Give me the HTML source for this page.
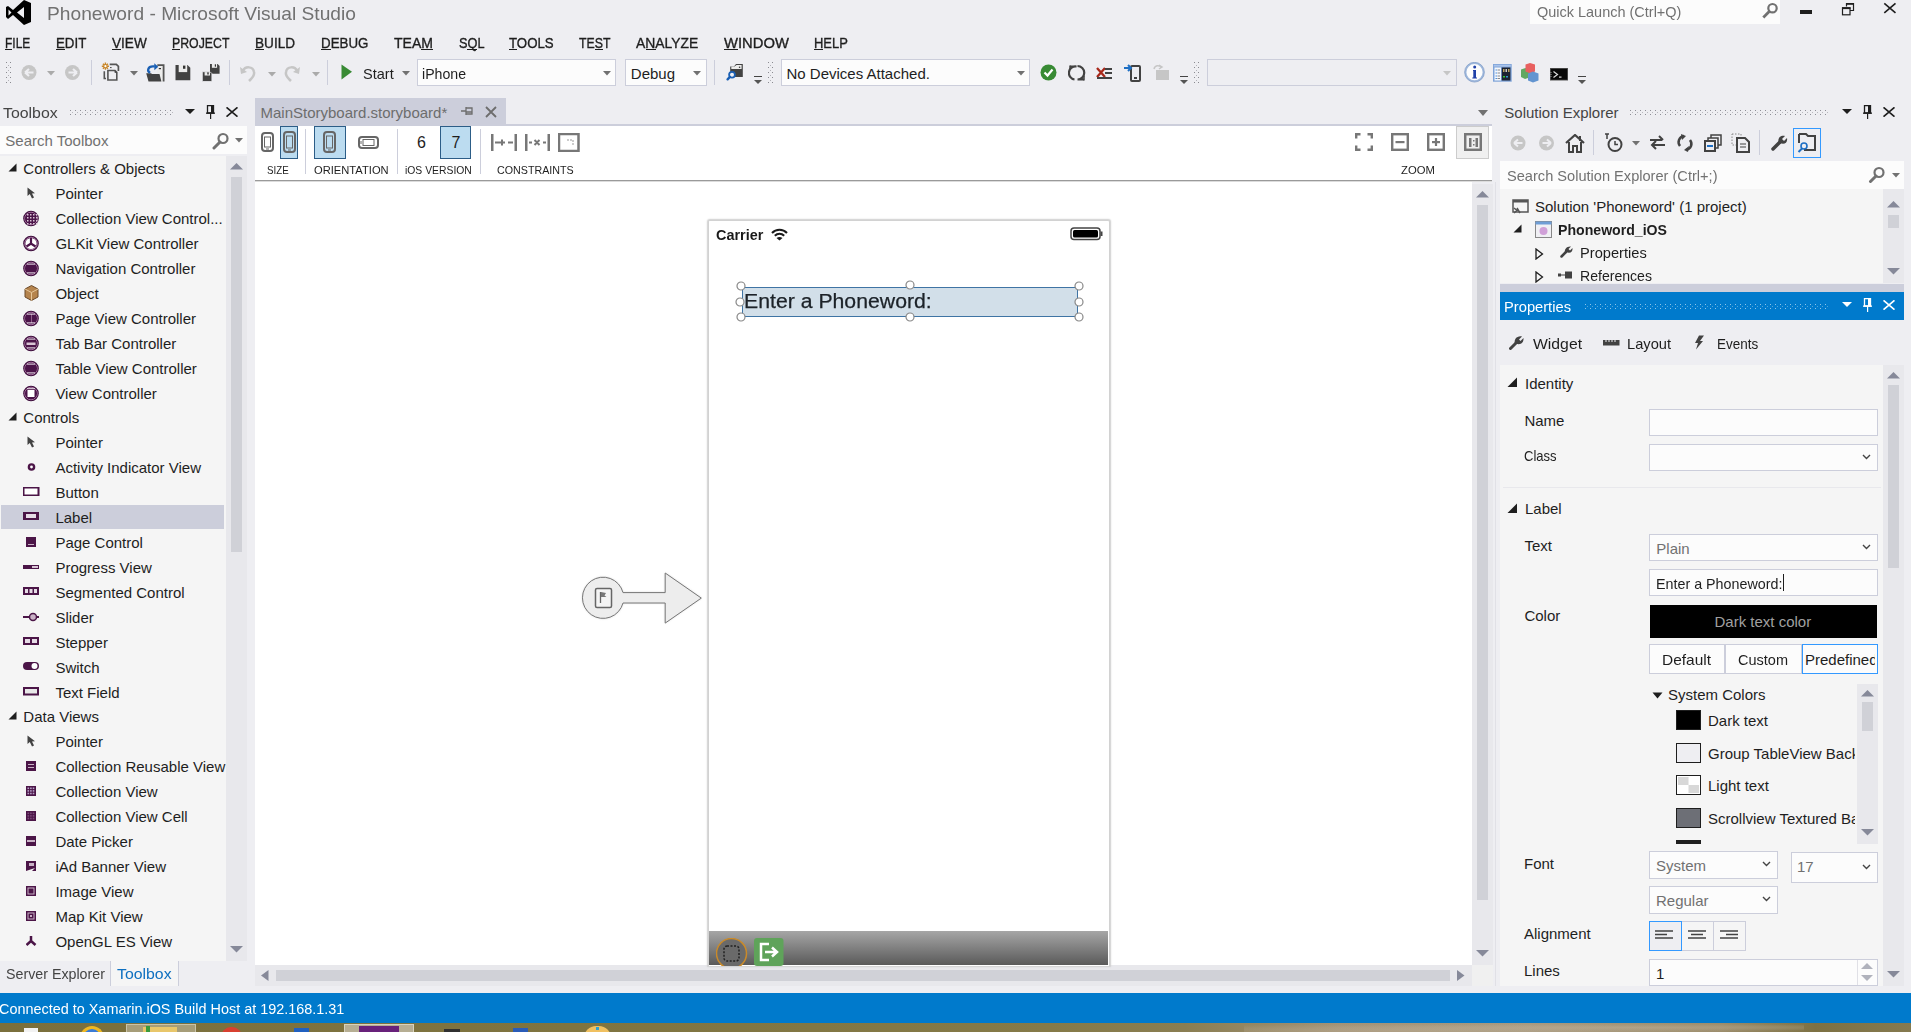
<!DOCTYPE html>
<html><head><meta charset="utf-8"><title>VS</title>
<style>
html,body{margin:0;padding:0;}
body{width:1911px;height:1032px;overflow:hidden;position:relative;background:#eeeef2;font-family:"Liberation Sans",sans-serif;}
body>div,body>svg{position:absolute;}
.t{position:absolute;white-space:nowrap;}
div>div.t{position:absolute;}
</style></head><body>
<svg style="left:5px;top:0px;" width="27" height="26" viewBox="0 0 27 26"><path d="M19 0 L26 3 L26 22 L19 25 L8 15 L3 19 L1 17 L1 7 L3 6 L8 10 Z M19 7 L12 12.5 L19 18 Z M3.5 9.5 L3.5 15.5 L6.5 12.5 Z" fill="#000" fill-rule="evenodd"/></svg>
<div class="t" style="left:46.5px;top:3.8px;font-size:19px;line-height:19px;color:#717171;transform:scaleX(1.010);transform-origin:0 0;">Phoneword - Microsoft Visual Studio</div>
<div style="left:1530px;top:0px;width:250px;height:24px;background:#fcfcfc;"></div>
<div class="t" style="left:1536.5px;top:3.6px;font-size:15px;line-height:15px;color:#717171;transform:scaleX(0.965);transform-origin:0 0;">Quick Launch (Ctrl+Q)</div>
<svg style="left:1760px;top:2px;" width="20" height="17" viewBox="0 0 20 17"><circle cx="12.5" cy="6.2" r="4.2" fill="none" stroke="#717171" stroke-width="2.2"/><path d="M9.5 9.2 L3.3 15.4" stroke="#717171" stroke-width="2.8"/></svg>
<div style="left:1800px;top:10px;width:12px;height:4px;background:#1e1e1e;"></div>
<svg style="left:1840px;top:2px;" width="16" height="15" viewBox="0 0 16 15"><path d="M6.5 4.5 L6.5 1.5 L13.5 1.5 L13.5 8.5 L10 8.5" stroke="#1e1e1e" stroke-width="1.2" fill="none"/><rect x="6.5" y="1" width="7" height="1.8" fill="#1e1e1e"/><rect x="2.5" y="5.8" width="7.5" height="7" fill="none" stroke="#1e1e1e" stroke-width="1.2"/><rect x="2" y="5.3" width="8.5" height="1.8" fill="#1e1e1e"/></svg>
<svg style="left:1883px;top:2px;" width="14" height="12" viewBox="0 0 14 12"><path d="M1.3 1.3 L12.5 10.8 M12.5 1.3 L1.3 10.8" stroke="#1e1e1e" stroke-width="1.6"/></svg>
<div class="t" style="left:5.1px;top:35.4px;font-size:15px;line-height:15px;color:#1e1e1e;transform:scaleX(0.799);transform-origin:0 0;-webkit-text-stroke:0.35px #1e1e1e;">FILE</div>
<div style="left:5px;top:49px;width:7px;height:1px;background:#1e1e1e;"></div>
<div class="t" style="left:56.0px;top:35.4px;font-size:15px;line-height:15px;color:#1e1e1e;transform:scaleX(0.887);transform-origin:0 0;-webkit-text-stroke:0.35px #1e1e1e;">EDIT</div>
<div style="left:56px;top:49px;width:9px;height:1px;background:#1e1e1e;"></div>
<div class="t" style="left:112.0px;top:35.4px;font-size:15px;line-height:15px;color:#1e1e1e;transform:scaleX(0.905);transform-origin:0 0;-webkit-text-stroke:0.35px #1e1e1e;">VIEW</div>
<div style="left:112px;top:49px;width:9px;height:1px;background:#1e1e1e;"></div>
<div class="t" style="left:172.2px;top:35.4px;font-size:15px;line-height:15px;color:#1e1e1e;transform:scaleX(0.820);transform-origin:0 0;-webkit-text-stroke:0.35px #1e1e1e;">PROJECT</div>
<div style="left:172px;top:49px;width:8px;height:1px;background:#1e1e1e;"></div>
<div class="t" style="left:255.0px;top:35.4px;font-size:15px;line-height:15px;color:#1e1e1e;transform:scaleX(0.906);transform-origin:0 0;-webkit-text-stroke:0.35px #1e1e1e;">BUILD</div>
<div style="left:255px;top:49px;width:9px;height:1px;background:#1e1e1e;"></div>
<div class="t" style="left:321.0px;top:35.4px;font-size:15px;line-height:15px;color:#1e1e1e;transform:scaleX(0.889);transform-origin:0 0;-webkit-text-stroke:0.35px #1e1e1e;">DEBUG</div>
<div style="left:321px;top:49px;width:10px;height:1px;background:#1e1e1e;"></div>
<div class="t" style="left:394.0px;top:35.4px;font-size:15px;line-height:15px;color:#1e1e1e;transform:scaleX(0.936);transform-origin:0 0;-webkit-text-stroke:0.35px #1e1e1e;">TEAM</div>
<div style="left:421px;top:49px;width:12px;height:1px;background:#1e1e1e;"></div>
<div class="t" style="left:458.5px;top:35.4px;font-size:15px;line-height:15px;color:#1e1e1e;transform:scaleX(0.850);transform-origin:0 0;-webkit-text-stroke:0.35px #1e1e1e;">SQL</div>
<div style="left:467px;top:49px;width:10px;height:1px;background:#1e1e1e;"></div>
<div class="t" style="left:508.9px;top:35.4px;font-size:15px;line-height:15px;color:#1e1e1e;transform:scaleX(0.884);transform-origin:0 0;-webkit-text-stroke:0.35px #1e1e1e;">TOOLS</div>
<div style="left:509px;top:49px;width:8px;height:1px;background:#1e1e1e;"></div>
<div class="t" style="left:579.2px;top:35.4px;font-size:15px;line-height:15px;color:#1e1e1e;transform:scaleX(0.820);transform-origin:0 0;-webkit-text-stroke:0.35px #1e1e1e;">TEST</div>
<div style="left:595px;top:49px;width:8px;height:1px;background:#1e1e1e;"></div>
<div class="t" style="left:636.3px;top:35.4px;font-size:15px;line-height:15px;color:#1e1e1e;transform:scaleX(0.927);transform-origin:0 0;-webkit-text-stroke:0.35px #1e1e1e;">ANALYZE</div>
<div style="left:646px;top:49px;width:10px;height:1px;background:#1e1e1e;"></div>
<div class="t" style="left:723.7px;top:35.4px;font-size:15px;line-height:15px;color:#1e1e1e;transform:scaleX(0.985);transform-origin:0 0;-webkit-text-stroke:0.35px #1e1e1e;">WINDOW</div>
<div style="left:724px;top:49px;width:14px;height:1px;background:#1e1e1e;"></div>
<div class="t" style="left:814.2px;top:35.4px;font-size:15px;line-height:15px;color:#1e1e1e;transform:scaleX(0.865);transform-origin:0 0;-webkit-text-stroke:0.35px #1e1e1e;">HELP</div>
<div style="left:814px;top:49px;width:9px;height:1px;background:#1e1e1e;"></div>
<svg style="left:5px;top:62px;" width="7" height="21" viewBox="0 0 7 21"><rect x="1" y="0" width="1" height="1" fill="#8a8a90"/><rect x="5" y="0" width="1" height="1" fill="#8a8a90"/><rect x="3" y="3" width="1" height="1" fill="#b4b4ba"/><rect x="1" y="5" width="1" height="1" fill="#8a8a90"/><rect x="5" y="5" width="1" height="1" fill="#8a8a90"/><rect x="3" y="8" width="1" height="1" fill="#b4b4ba"/><rect x="1" y="10" width="1" height="1" fill="#8a8a90"/><rect x="5" y="10" width="1" height="1" fill="#8a8a90"/><rect x="3" y="13" width="1" height="1" fill="#b4b4ba"/><rect x="1" y="15" width="1" height="1" fill="#8a8a90"/><rect x="5" y="15" width="1" height="1" fill="#8a8a90"/><rect x="3" y="18" width="1" height="1" fill="#b4b4ba"/><rect x="1" y="20" width="1" height="1" fill="#8a8a90"/><rect x="5" y="20" width="1" height="1" fill="#8a8a90"/></svg>
<svg style="left:21px;top:64px;" width="17" height="17" viewBox="0 0 17 17"><circle cx="8" cy="8.5" r="7.5" fill="#c6c6c6"/><path d="M4 8.5 L8 5 M4 8.5 L8 12 M4 8.5 L12.5 8.5" stroke="#eeeef2" stroke-width="2.2"/></svg>
<svg style="left:47px;top:71px;" width="8" height="5" viewBox="0 0 8 5"><path d="M0 0 L8 0 L4 4.5 Z" fill="#aaa"/></svg>
<svg style="left:64px;top:64px;" width="17" height="17" viewBox="0 0 17 17"><circle cx="8.5" cy="8.5" r="7.5" fill="#c6c6c6"/><path d="M13 8.5 L9 5 M13 8.5 L9 12 M13 8.5 L4.5 8.5" stroke="#eeeef2" stroke-width="2.2"/></svg>
<div style="left:91px;top:60px;width:1px;height:25px;background:#cccedb;"></div>
<svg style="left:100px;top:60px;" width="21" height="23" viewBox="0 0 21 23"><path d="M5.4 2.6 L5.4 9.8 M1.8 6.2 L9 6.2 M2.9 3.7 L7.9 8.7 M7.9 3.7 L2.9 8.7" stroke="#c8862a" stroke-width="1.4"/><circle cx="5.4" cy="6.2" r="1.1" fill="#fff"/><path d="M9.7 4.4 L16.3 4.4 L18.4 6.4 L18.4 11" stroke="#555" stroke-width="1.7" fill="none"/><path d="M10 7.6 L11.6 7.6" stroke="#444" stroke-width="1"/><path d="M7.9 10.5 L15 10.5 L16.8 12.3 L16.8 20 L7.9 20 Z" fill="#eeeef2" stroke="#555" stroke-width="1.6"/><path d="M14.6 10.5 L16.8 12.7 L14.6 12.7 Z" fill="#333"/><path d="M4.3 11.3 L4.3 18.5 L6 18.5" stroke="#555" stroke-width="1.6" fill="none"/></svg>
<svg style="left:130px;top:71px;" width="8" height="5" viewBox="0 0 8 5"><path d="M0 0 L8 0 L4 4.5 Z" fill="#717171"/></svg>
<svg style="left:145px;top:62px;" width="20" height="21" viewBox="0 0 20 21"><rect x="12.3" y="3.2" width="6.3" height="16.2" fill="#ececec"/><path d="M12.3 3.2 L18.6 3.2 L18.6 19.4" stroke="#555" stroke-width="1.8" fill="none"/><path d="M13.8 6.6 L16 6.6" stroke="#333" stroke-width="1.2"/><path d="M1.2 11.2 L6 11.2 L7 12 L14.5 12 L16.4 19.6 L3.5 19.6 Z" fill="#424242"/><path d="M5.2 10.8 C1.8 9.4,2.6 4,8.6 4.4 L9.8 4.4" stroke="#1a5fb4" stroke-width="2.3" fill="none"/><path d="M9.3 1.3 L13.3 4.8 L9.3 8.2 Z" fill="#1a5fb4"/></svg>
<svg style="left:175px;top:65px;" width="16" height="16" viewBox="0 0 16 16"><path d="M0.5 0 L12.5 0 L15.3 2.8 L15.3 15.2 L0.5 15.2 Z" fill="#424242"/><rect x="3.7" y="0" width="8.5" height="7.1" fill="#ececec"/><rect x="8" y="0.6" width="2.4" height="3.2" fill="#333"/></svg>
<svg style="left:202px;top:64px;" width="19" height="19" viewBox="0 0 19 19"><path d="M8 0 L15.6 0 L17.6 2 L17.6 9.8 L8 9.8 Z" fill="#424242"/><rect x="9.9" y="0" width="5.2" height="3.8" fill="#ececec"/><rect x="12.8" y="0.3" width="1.2" height="2.4" fill="#333"/><path d="M0.3 7.7 L8 7.7 L9.9 9.6 L9.9 17.5 L0.3 17.5 Z" fill="#424242" stroke="#eeeef2" stroke-width="0.8"/><rect x="2.6" y="8.1" width="5.4" height="3.4" fill="#ececec"/><rect x="5.3" y="8.3" width="1.4" height="2.2" fill="#333"/></svg>
<div style="left:229px;top:60px;width:1px;height:25px;background:#cccedb;"></div>
<svg style="left:239px;top:64px;" width="18" height="18" viewBox="0 0 18 18"><path d="M4 7 C6 2,14 2,15 8 C16 12,13 14,10 17" stroke="#c6c6c6" stroke-width="2.5" fill="none"/><path d="M1 3 L2 10 L8 8 Z" fill="#c6c6c6"/></svg>
<svg style="left:268px;top:72px;" width="8" height="5" viewBox="0 0 8 5"><path d="M0 0 L8 0 L4 4.5 Z" fill="#aaa"/></svg>
<svg style="left:283px;top:64px;" width="18" height="18" viewBox="0 0 18 18"><path d="M14 7 C12 2,4 2,3 8 C2 12,5 14,8 17" stroke="#c6c6c6" stroke-width="2.5" fill="none"/><path d="M17 3 L16 10 L10 8 Z" fill="#c6c6c6"/></svg>
<svg style="left:312px;top:72px;" width="8" height="5" viewBox="0 0 8 5"><path d="M0 0 L8 0 L4 4.5 Z" fill="#aaa"/></svg>
<div style="left:327px;top:60px;width:1px;height:25px;background:#cccedb;"></div>
<svg style="left:341px;top:64px;" width="12" height="16" viewBox="0 0 12 16"><path d="M0.5 0.5 L11 7.8 L0.5 15.5 Z" fill="#388a34"/></svg>
<div class="t" style="left:363.3px;top:66.2px;font-size:15px;line-height:15px;color:#1e1e1e;transform:scaleX(0.969);transform-origin:0 0;">Start</div>
<svg style="left:402px;top:71px;" width="8" height="5" viewBox="0 0 8 5"><path d="M0 0 L8 0 L4 4.5 Z" fill="#717171"/></svg>
<div style="left:417px;top:59px;width:199px;height:27px;background:#fcfcfc;border:1px solid #cccedb;box-sizing:border-box;"></div>
<div class="t" style="left:422.4px;top:66.2px;font-size:15px;line-height:15px;color:#1e1e1e;transform:scaleX(0.942);transform-origin:0 0;">iPhone</div>
<svg style="left:603px;top:71px;" width="8" height="5" viewBox="0 0 8 5"><path d="M0 0 L8 0 L4 4.5 Z" fill="#717171"/></svg>
<div style="left:625px;top:59px;width:82px;height:27px;background:#fcfcfc;border:1px solid #cccedb;box-sizing:border-box;"></div>
<div class="t" style="left:630.8px;top:66.2px;font-size:15px;line-height:15px;color:#1e1e1e;">Debug</div>
<svg style="left:693px;top:71px;" width="8" height="5" viewBox="0 0 8 5"><path d="M0 0 L8 0 L4 4.5 Z" fill="#717171"/></svg>
<div style="left:714px;top:60px;width:1px;height:25px;background:#cccedb;"></div>
<svg style="left:726px;top:62px;" width="19" height="20" viewBox="0 0 19 20"><path d="M4.2 4.5 L8 4.5 L10 2 L16.8 2 L16.8 14.9 L4.2 14.9 Z" fill="#424242"/><path d="M5.3 4.6 L8.5 4.6 L10.5 3 L15.6 3 L15.6 7 L5.3 7 Z" fill="#ececec"/><circle cx="13.6" cy="5.3" r="0.8" fill="#333"/><circle cx="6" cy="12.8" r="2.9" fill="#eeeef2" stroke="#1a5fb4" stroke-width="1.8"/><path d="M3.9 14.9 L1.6 17.4" stroke="#1a5fb4" stroke-width="2.3" stroke-linecap="round"/></svg>
<div style="left:754px;top:76px;width:8px;height:1px;background:#444;"></div>
<svg style="left:754px;top:79.5px;" width="8" height="4" viewBox="0 0 8 4"><path d="M0 0 L8 0 L4 4 Z" fill="#555"/></svg>
<svg style="left:767px;top:62px;" width="7" height="21" viewBox="0 0 7 21"><rect x="1" y="0" width="1" height="1" fill="#8a8a90"/><rect x="5" y="0" width="1" height="1" fill="#8a8a90"/><rect x="3" y="3" width="1" height="1" fill="#b4b4ba"/><rect x="1" y="5" width="1" height="1" fill="#8a8a90"/><rect x="5" y="5" width="1" height="1" fill="#8a8a90"/><rect x="3" y="8" width="1" height="1" fill="#b4b4ba"/><rect x="1" y="10" width="1" height="1" fill="#8a8a90"/><rect x="5" y="10" width="1" height="1" fill="#8a8a90"/><rect x="3" y="13" width="1" height="1" fill="#b4b4ba"/><rect x="1" y="15" width="1" height="1" fill="#8a8a90"/><rect x="5" y="15" width="1" height="1" fill="#8a8a90"/><rect x="3" y="18" width="1" height="1" fill="#b4b4ba"/><rect x="1" y="20" width="1" height="1" fill="#8a8a90"/><rect x="5" y="20" width="1" height="1" fill="#8a8a90"/></svg>
<div style="left:781px;top:59px;width:249px;height:27px;background:#fcfcfc;border:1px solid #cccedb;box-sizing:border-box;"></div>
<div class="t" style="left:786.5px;top:66.2px;font-size:15px;line-height:15px;color:#1e1e1e;">No Devices Attached.</div>
<svg style="left:1017px;top:71px;" width="8" height="5" viewBox="0 0 8 5"><path d="M0 0 L8 0 L4 4.5 Z" fill="#717171"/></svg>
<svg style="left:1040px;top:64px;" width="18" height="18" viewBox="0 0 18 18"><circle cx="8.5" cy="8.5" r="8" fill="#388a34"/><path d="M4.5 8.5 L7.5 11.5 L12.5 5.5" stroke="#fff" stroke-width="2.2" fill="none"/></svg>
<svg style="left:1068px;top:63px;" width="18" height="19" viewBox="0 0 18 19"><path d="M2 3.5 L8.5 3.5 A6.5 6.5 0 0 0 6.5 16.5" stroke="#424242" stroke-width="2.2" fill="none"/><path d="M9.5 3 A6.5 6.5 0 0 1 9.5 16.5 L16 16.5" stroke="#424242" stroke-width="2.2" fill="none"/><path d="M2 2.5 L2 6" stroke="#424242" stroke-width="1.5"/><path d="M16 13 L16 17.5" stroke="#424242" stroke-width="1.5"/></svg>
<svg style="left:1095px;top:64px;" width="19" height="18" viewBox="0 0 19 18"><path d="M2 4 L10 13 M10 4 L2 13" stroke="#a8281a" stroke-width="2.3"/><rect x="10" y="4" width="7" height="2" fill="#424242"/><rect x="10" y="8" width="7" height="2" fill="#424242"/><rect x="2" y="13" width="15" height="2" fill="#424242"/></svg>
<svg style="left:1123px;top:63px;" width="19" height="19" viewBox="0 0 19 19"><rect x="8" y="3" width="9" height="15" rx="1" fill="none" stroke="#424242" stroke-width="2"/><rect x="11" y="14" width="3" height="2" fill="#424242"/><path d="M1 5 L8 5 M5 2 L8 5 L5 8" stroke="#1e6fc4" stroke-width="2" fill="none"/></svg>
<svg style="left:1151px;top:63px;" width="20" height="19" viewBox="0 0 20 19"><rect x="5" y="7" width="13" height="10" fill="#c6c6c6"/><path d="M3 6 C4 2,8 2,10 4 M8 2 L11 4 L8 6" stroke="#c6c6c6" stroke-width="1.5" fill="none"/></svg>
<div style="left:1180px;top:76px;width:8px;height:1px;background:#444;"></div>
<svg style="left:1180px;top:79.5px;" width="8" height="4" viewBox="0 0 8 4"><path d="M0 0 L8 0 L4 4 Z" fill="#555"/></svg>
<svg style="left:1193px;top:62px;" width="7" height="21" viewBox="0 0 7 21"><rect x="1" y="0" width="1" height="1" fill="#8a8a90"/><rect x="5" y="0" width="1" height="1" fill="#8a8a90"/><rect x="3" y="3" width="1" height="1" fill="#b4b4ba"/><rect x="1" y="5" width="1" height="1" fill="#8a8a90"/><rect x="5" y="5" width="1" height="1" fill="#8a8a90"/><rect x="3" y="8" width="1" height="1" fill="#b4b4ba"/><rect x="1" y="10" width="1" height="1" fill="#8a8a90"/><rect x="5" y="10" width="1" height="1" fill="#8a8a90"/><rect x="3" y="13" width="1" height="1" fill="#b4b4ba"/><rect x="1" y="15" width="1" height="1" fill="#8a8a90"/><rect x="5" y="15" width="1" height="1" fill="#8a8a90"/><rect x="3" y="18" width="1" height="1" fill="#b4b4ba"/><rect x="1" y="20" width="1" height="1" fill="#8a8a90"/><rect x="5" y="20" width="1" height="1" fill="#8a8a90"/></svg>
<div style="left:1207px;top:59px;width:250px;height:27px;background:#eeeef2;border:1px solid #cccedb;box-sizing:border-box;"></div>
<svg style="left:1443px;top:71px;" width="8" height="5" viewBox="0 0 8 5"><path d="M0 0 L8 0 L4 4.5 Z" fill="#c6c6c6"/></svg>
<svg style="left:1464px;top:62px;" width="21" height="21" viewBox="0 0 21 21"><circle cx="10.5" cy="10.2" r="9" fill="#fdfdfd" stroke="#9fb8dc" stroke-width="1.8"/><circle cx="10.5" cy="10.2" r="9.9" fill="none" stroke="#6f8fc0" stroke-width="0.6"/><path d="M9 8 L12 8 L12 15.5 L13 15.5 L13 16.5 L8.3 16.5 L8.3 15.5 L9.3 15.5 L9.3 9 L9 9 Z" fill="#1f3fa8"/><circle cx="10.7" cy="5" r="1.5" fill="#1f3fa8"/></svg>
<svg style="left:1493px;top:64px;" width="19" height="18" viewBox="0 0 19 18"><rect x="0" y="0" width="18.7" height="17.7" fill="#7ea3d9"/><rect x="0.8" y="0.8" width="17" height="1.8" fill="#a9c3ea"/><rect x="1.5" y="3.5" width="6.5" height="13" fill="#f4f7fc"/><rect x="8.8" y="3.5" width="8.6" height="13" fill="#1c2230"/><rect x="2.5" y="5.5" width="1.5" height="1" fill="#4a90e0"/><rect x="4.5" y="5.5" width="2.5" height="1" fill="#888"/><rect x="2.5" y="8.5" width="1.5" height="1" fill="#4a90e0"/><rect x="4.5" y="8.5" width="2.5" height="1" fill="#888"/><rect x="2.5" y="11.5" width="1.5" height="1" fill="#4a90e0"/><rect x="4.5" y="11.5" width="2.5" height="1" fill="#888"/><rect x="2.5" y="14" width="1.5" height="1" fill="#4a90e0"/><rect x="4.5" y="14" width="2.5" height="1" fill="#888"/><rect x="10" y="5" width="1.5" height="3" fill="#b8a060"/><rect x="12.5" y="5" width="1.5" height="3" fill="#ccc"/><rect x="15" y="5" width="1.5" height="3" fill="#b8a060"/><rect x="10" y="12" width="2" height="1.5" fill="#3c3"/><rect x="13" y="12" width="2" height="1.5" fill="#39c"/></svg>
<svg style="left:1520px;top:63px;" width="22" height="20" viewBox="0 0 22 20"><path d="M1 6.5 L5.5 5 L9.5 7 L9.5 14.5 L5 16 L1 14 Z" fill="#62a862"/><path d="M5.5 1.5 L10 0 L15 1.5 L15 8.5 L10.5 10.5 L5.5 8.5 Z" fill="#e86060"/><path d="M8 10.5 L13 8.5 L18.5 10.5 L18.5 17.5 L13 19.5 L8 17.5 Z" fill="#6294d0"/></svg>
<svg style="left:1550px;top:68px;" width="18" height="13" viewBox="0 0 18 13"><rect x="0" y="0" width="18" height="12.5" fill="#555"/><rect x="0.8" y="0.8" width="16.4" height="10.9" fill="#080808"/><path d="M1 4 L1 9" stroke="#bbb" stroke-width="0.8" stroke-dasharray="1 1"/><path d="M3.5 3.5 L7.5 6.5 L3.5 9.5" stroke="#ddd" stroke-width="1.2" fill="none"/><rect x="9" y="8.5" width="2.5" height="1.2" fill="#ddd"/></svg>
<div style="left:1578px;top:76px;width:8px;height:1px;background:#444;"></div>
<svg style="left:1578px;top:79.5px;" width="8" height="4" viewBox="0 0 8 4"><path d="M0 0 L8 0 L4 4 Z" fill="#555"/></svg>
<div class="t" style="left:3.4px;top:105.1px;font-size:15px;line-height:15px;color:#444444;transform:scaleX(1.058);transform-origin:0 0;">Toolbox</div>
<svg style="left:70px;top:110px;" width="106" height="5" viewBox="0 0 106 5"><rect x="0" y="0" width="1" height="1" fill="#8e8e96"/><rect x="2" y="2" width="1" height="1" fill="#8e8e96" opacity=".55"/><rect x="0" y="4" width="1" height="1" fill="#8e8e96"/><rect x="5" y="0" width="1" height="1" fill="#8e8e96"/><rect x="7" y="2" width="1" height="1" fill="#8e8e96" opacity=".55"/><rect x="5" y="4" width="1" height="1" fill="#8e8e96"/><rect x="10" y="0" width="1" height="1" fill="#8e8e96"/><rect x="12" y="2" width="1" height="1" fill="#8e8e96" opacity=".55"/><rect x="10" y="4" width="1" height="1" fill="#8e8e96"/><rect x="15" y="0" width="1" height="1" fill="#8e8e96"/><rect x="17" y="2" width="1" height="1" fill="#8e8e96" opacity=".55"/><rect x="15" y="4" width="1" height="1" fill="#8e8e96"/><rect x="20" y="0" width="1" height="1" fill="#8e8e96"/><rect x="22" y="2" width="1" height="1" fill="#8e8e96" opacity=".55"/><rect x="20" y="4" width="1" height="1" fill="#8e8e96"/><rect x="25" y="0" width="1" height="1" fill="#8e8e96"/><rect x="27" y="2" width="1" height="1" fill="#8e8e96" opacity=".55"/><rect x="25" y="4" width="1" height="1" fill="#8e8e96"/><rect x="30" y="0" width="1" height="1" fill="#8e8e96"/><rect x="32" y="2" width="1" height="1" fill="#8e8e96" opacity=".55"/><rect x="30" y="4" width="1" height="1" fill="#8e8e96"/><rect x="35" y="0" width="1" height="1" fill="#8e8e96"/><rect x="37" y="2" width="1" height="1" fill="#8e8e96" opacity=".55"/><rect x="35" y="4" width="1" height="1" fill="#8e8e96"/><rect x="40" y="0" width="1" height="1" fill="#8e8e96"/><rect x="42" y="2" width="1" height="1" fill="#8e8e96" opacity=".55"/><rect x="40" y="4" width="1" height="1" fill="#8e8e96"/><rect x="45" y="0" width="1" height="1" fill="#8e8e96"/><rect x="47" y="2" width="1" height="1" fill="#8e8e96" opacity=".55"/><rect x="45" y="4" width="1" height="1" fill="#8e8e96"/><rect x="50" y="0" width="1" height="1" fill="#8e8e96"/><rect x="52" y="2" width="1" height="1" fill="#8e8e96" opacity=".55"/><rect x="50" y="4" width="1" height="1" fill="#8e8e96"/><rect x="55" y="0" width="1" height="1" fill="#8e8e96"/><rect x="57" y="2" width="1" height="1" fill="#8e8e96" opacity=".55"/><rect x="55" y="4" width="1" height="1" fill="#8e8e96"/><rect x="60" y="0" width="1" height="1" fill="#8e8e96"/><rect x="62" y="2" width="1" height="1" fill="#8e8e96" opacity=".55"/><rect x="60" y="4" width="1" height="1" fill="#8e8e96"/><rect x="65" y="0" width="1" height="1" fill="#8e8e96"/><rect x="67" y="2" width="1" height="1" fill="#8e8e96" opacity=".55"/><rect x="65" y="4" width="1" height="1" fill="#8e8e96"/><rect x="70" y="0" width="1" height="1" fill="#8e8e96"/><rect x="72" y="2" width="1" height="1" fill="#8e8e96" opacity=".55"/><rect x="70" y="4" width="1" height="1" fill="#8e8e96"/><rect x="75" y="0" width="1" height="1" fill="#8e8e96"/><rect x="77" y="2" width="1" height="1" fill="#8e8e96" opacity=".55"/><rect x="75" y="4" width="1" height="1" fill="#8e8e96"/><rect x="80" y="0" width="1" height="1" fill="#8e8e96"/><rect x="82" y="2" width="1" height="1" fill="#8e8e96" opacity=".55"/><rect x="80" y="4" width="1" height="1" fill="#8e8e96"/><rect x="85" y="0" width="1" height="1" fill="#8e8e96"/><rect x="87" y="2" width="1" height="1" fill="#8e8e96" opacity=".55"/><rect x="85" y="4" width="1" height="1" fill="#8e8e96"/><rect x="90" y="0" width="1" height="1" fill="#8e8e96"/><rect x="92" y="2" width="1" height="1" fill="#8e8e96" opacity=".55"/><rect x="90" y="4" width="1" height="1" fill="#8e8e96"/><rect x="95" y="0" width="1" height="1" fill="#8e8e96"/><rect x="97" y="2" width="1" height="1" fill="#8e8e96" opacity=".55"/><rect x="95" y="4" width="1" height="1" fill="#8e8e96"/><rect x="100" y="0" width="1" height="1" fill="#8e8e96"/><rect x="102" y="2" width="1" height="1" fill="#8e8e96" opacity=".55"/><rect x="100" y="4" width="1" height="1" fill="#8e8e96"/></svg>
<svg style="left:185px;top:109px;" width="10" height="5" viewBox="0 0 10 5"><path d="M0 0 L10 0 L5 5 Z" fill="#1e1e1e"/></svg>
<svg style="left:206px;top:105px;" width="9" height="14" viewBox="0 0 9 14"><path d="M1.5 0.5 L7.5 0.5 L7.5 8 L1.5 8 Z" fill="none" stroke="#1e1e1e" stroke-width="1.3"/><rect x="5" y="1" width="2.5" height="7" fill="#1e1e1e"/><rect x="0" y="7.5" width="9" height="1.3" fill="#1e1e1e"/><rect x="4" y="8.5" width="1.2" height="5.5" fill="#1e1e1e"/></svg>
<svg style="left:226px;top:107px;" width="12" height="10" viewBox="0 0 12 10"><path d="M0.5 0.3 L11.5 9.7 M11.5 0.3 L0.5 9.7" stroke="#1e1e1e" stroke-width="1.6"/></svg>
<div style="left:0px;top:126px;width:247px;height:28px;background:#fcfcfc;"></div>
<div class="t" style="left:5.3px;top:133.2px;font-size:15px;line-height:15px;color:#717171;">Search Toolbox</div>
<svg style="left:211px;top:132px;" width="20" height="18" viewBox="0 0 20 18"><circle cx="12" cy="6.5" r="4.5" fill="none" stroke="#717171" stroke-width="2.2"/><path d="M9 10 L3 16" stroke="#717171" stroke-width="3" stroke-linecap="round"/></svg>
<svg style="left:235px;top:138px;" width="8" height="5" viewBox="0 0 8 5"><path d="M0 0 L8 0 L4 4.5 Z" fill="#717171"/></svg>
<div style="left:0px;top:156px;width:226px;height:805px;background:#f5f5f5;"></div>
<div style="left:226px;top:156px;width:21px;height:805px;background:#e8e8ec;"></div>
<svg style="left:230px;top:163px;" width="13" height="7" viewBox="0 0 13 7"><path d="M0 6.5 L6.5 0 L13 6.5 Z" fill="#868999"/></svg>
<svg style="left:230px;top:946px;" width="13" height="7" viewBox="0 0 13 7"><path d="M0 0 L6.5 6.5 L13 0 Z" fill="#868999"/></svg>
<div style="left:231px;top:177px;width:11px;height:375px;background:#d0d1d7;"></div>
<div style="left:1px;top:505px;width:223px;height:24px;background:#cccedb;"></div>
<svg style="left:8px;top:162.5px;" width="9" height="9" viewBox="0 0 9 9"><path d="M8.5 0.5 L8.5 8.5 L0.5 8.5 Z" fill="#1e1e1e"/></svg>
<div class="t" style="left:23.3px;top:160.8px;font-size:15px;line-height:15px;color:#1e1e1e;">Controllers &amp; Objects</div>
<svg style="left:27px;top:187px;" width="9" height="13" viewBox="0 0 9 13"><path d="M0.5 0.5 L0.5 9 L2.8 7 L5 11.5 L7 10.5 L5 6.5 L8 6.2 Z" fill="#424242"/></svg>
<div class="t" style="left:55.4px;top:186.3px;font-size:15px;line-height:15px;color:#1e1e1e;">Pointer</div>
<svg style="left:23px;top:210px;" width="17" height="17" viewBox="0 0 17 17"><circle cx="8" cy="8.5" r="7.8" fill="#3a0a39"/><circle cx="8" cy="8.5" r="6.3" fill="none" stroke="#b07aa8" stroke-width="0.9"/><circle cx="8" cy="8.5" r="5.6" fill="#4b1449"/><rect x="4" y="4" width="1.5" height="1.5" fill="#d9c6d6"/><rect x="4" y="7" width="1.5" height="1.5" fill="#d9c6d6"/><rect x="4" y="10" width="1.5" height="1.5" fill="#d9c6d6"/><rect x="4" y="13" width="1.5" height="1.5" fill="#d9c6d6"/><rect x="7" y="4" width="1.5" height="1.5" fill="#d9c6d6"/><rect x="7" y="7" width="1.5" height="1.5" fill="#d9c6d6"/><rect x="7" y="10" width="1.5" height="1.5" fill="#d9c6d6"/><rect x="7" y="13" width="1.5" height="1.5" fill="#d9c6d6"/><rect x="10" y="4" width="1.5" height="1.5" fill="#d9c6d6"/><rect x="10" y="7" width="1.5" height="1.5" fill="#d9c6d6"/><rect x="10" y="10" width="1.5" height="1.5" fill="#d9c6d6"/><rect x="10" y="13" width="1.5" height="1.5" fill="#d9c6d6"/><rect x="13" y="4" width="1.5" height="1.5" fill="#d9c6d6"/><rect x="13" y="7" width="1.5" height="1.5" fill="#d9c6d6"/><rect x="13" y="10" width="1.5" height="1.5" fill="#d9c6d6"/><rect x="13" y="13" width="1.5" height="1.5" fill="#d9c6d6"/></svg>
<div class="t" style="left:55.4px;top:211.3px;font-size:15px;line-height:15px;color:#1e1e1e;">Collection View Control...</div>
<svg style="left:23px;top:235px;" width="17" height="17" viewBox="0 0 17 17"><circle cx="8" cy="8.5" r="7.8" fill="#3a0a39"/><circle cx="8" cy="8.5" r="6.3" fill="none" stroke="#b07aa8" stroke-width="0.9"/><circle cx="8" cy="8.5" r="5.6" fill="#4b1449"/><circle cx="8" cy="8.5" r="5.6" fill="#fff"/><path d="M8 3 L8 8.5 M3.5 11.5 L8 8.5 L12.5 11.5" stroke="#4b1449" stroke-width="2.2" fill="none"/></svg>
<div class="t" style="left:55.4px;top:236.3px;font-size:15px;line-height:15px;color:#1e1e1e;">GLKit View Controller</div>
<svg style="left:23px;top:260px;" width="17" height="17" viewBox="0 0 17 17"><circle cx="8" cy="8.5" r="7.8" fill="#3a0a39"/><circle cx="8" cy="8.5" r="6.3" fill="none" stroke="#b07aa8" stroke-width="0.9"/><circle cx="8" cy="8.5" r="5.6" fill="#4b1449"/><rect x="4" y="3.6" width="8" height="1" fill="#f0e8ef"/><rect x="4" y="12.4" width="8" height="1" fill="#f0e8ef"/></svg>
<div class="t" style="left:55.4px;top:261.3px;font-size:15px;line-height:15px;color:#1e1e1e;">Navigation Controller</div>
<svg style="left:24px;top:285px;" width="15" height="16" viewBox="0 0 15 16"><path d="M7.5 0.5 L14 4 L14 12 L7.5 15.5 L1 12 L1 4 Z" fill="#b5844d" stroke="#6b4a2a" stroke-width="1"/><path d="M1 4 L7.5 7.5 L14 4 M7.5 7.5 L7.5 15.5" stroke="#e6c79a" stroke-width="1" fill="none"/></svg>
<div class="t" style="left:55.4px;top:286.3px;font-size:15px;line-height:15px;color:#1e1e1e;">Object</div>
<svg style="left:23px;top:310px;" width="17" height="17" viewBox="0 0 17 17"><circle cx="8" cy="8.5" r="7.8" fill="#3a0a39"/><circle cx="8" cy="8.5" r="6.3" fill="none" stroke="#b07aa8" stroke-width="0.9"/><circle cx="8" cy="8.5" r="5.6" fill="#4b1449"/><rect x="8" y="4" width="0.9" height="9" fill="#9a6a94"/><rect x="4" y="3.6" width="8" height="1" fill="#f0e8ef"/><rect x="4" y="12.4" width="8" height="1" fill="#f0e8ef"/></svg>
<div class="t" style="left:55.4px;top:311.3px;font-size:15px;line-height:15px;color:#1e1e1e;">Page View Controller</div>
<svg style="left:23px;top:335px;" width="17" height="17" viewBox="0 0 17 17"><circle cx="8" cy="8.5" r="7.8" fill="#3a0a39"/><circle cx="8" cy="8.5" r="6.3" fill="none" stroke="#b07aa8" stroke-width="0.9"/><circle cx="8" cy="8.5" r="5.6" fill="#4b1449"/><rect x="3.5" y="7.5" width="9" height="2.5" fill="#d8c4d4"/><rect x="4" y="3.6" width="8" height="1" fill="#f0e8ef"/><rect x="4" y="12.4" width="8" height="1" fill="#f0e8ef"/></svg>
<div class="t" style="left:55.4px;top:336.3px;font-size:15px;line-height:15px;color:#1e1e1e;">Tab Bar Controller</div>
<svg style="left:23px;top:360px;" width="17" height="17" viewBox="0 0 17 17"><circle cx="8" cy="8.5" r="7.8" fill="#3a0a39"/><circle cx="8" cy="8.5" r="6.3" fill="none" stroke="#b07aa8" stroke-width="0.9"/><circle cx="8" cy="8.5" r="5.6" fill="#4b1449"/><rect x="4" y="3.6" width="8" height="1" fill="#f0e8ef"/><rect x="4" y="12.4" width="8" height="1" fill="#f0e8ef"/></svg>
<div class="t" style="left:55.4px;top:361.3px;font-size:15px;line-height:15px;color:#1e1e1e;">Table View Controller</div>
<svg style="left:23px;top:385px;" width="17" height="17" viewBox="0 0 17 17"><circle cx="8" cy="8.5" r="7.8" fill="#3a0a39"/><circle cx="8" cy="8.5" r="6.3" fill="none" stroke="#b07aa8" stroke-width="0.9"/><circle cx="8" cy="8.5" r="5.6" fill="#4b1449"/><rect x="4.5" y="5" width="7" height="7" fill="#fff"/><rect x="4" y="3.2" width="8" height="1" fill="#f0e8ef"/></svg>
<div class="t" style="left:55.4px;top:386.3px;font-size:15px;line-height:15px;color:#1e1e1e;">View Controller</div>
<svg style="left:8px;top:412px;" width="9" height="9" viewBox="0 0 9 9"><path d="M8.5 0.5 L8.5 8.5 L0.5 8.5 Z" fill="#1e1e1e"/></svg>
<div class="t" style="left:23.3px;top:410.3px;font-size:15px;line-height:15px;color:#1e1e1e;">Controls</div>
<svg style="left:27px;top:436px;" width="9" height="13" viewBox="0 0 9 13"><path d="M0.5 0.5 L0.5 9 L2.8 7 L5 11.5 L7 10.5 L5 6.5 L8 6.2 Z" fill="#424242"/></svg>
<div class="t" style="left:55.4px;top:435.3px;font-size:15px;line-height:15px;color:#1e1e1e;">Pointer</div>
<svg style="left:27px;top:462px;" width="9" height="10" viewBox="0 0 9 10"><circle cx="4.5" cy="5" r="3.8" fill="#4b1547"/><circle cx="4.5" cy="5" r="1.4" fill="#fff"/></svg>
<div class="t" style="left:55.4px;top:460.3px;font-size:15px;line-height:15px;color:#1e1e1e;">Activity Indicator View</div>
<svg style="left:23px;top:487px;" width="17" height="9" viewBox="0 0 17 9"><rect x="0.5" y="0.5" width="15" height="8" fill="#fff" stroke="#4b1547" stroke-width="2"/></svg>
<div class="t" style="left:55.4px;top:485.3px;font-size:15px;line-height:15px;color:#1e1e1e;">Button</div>
<svg style="left:23px;top:512px;" width="17" height="9" viewBox="0 0 17 9"><rect x="0" y="0" width="16" height="8" fill="#4b1547"/><rect x="3" y="2" width="10" height="4" fill="#e6dce6"/></svg>
<div class="t" style="left:55.4px;top:510.3px;font-size:15px;line-height:15px;color:#1e1e1e;">Label</div>
<svg style="left:26px;top:537px;" width="11" height="11" viewBox="0 0 11 11"><rect x="0" y="0" width="10" height="10" fill="#4b1547"/><rect x="2" y="7" width="6" height="1" fill="#c9b2c6"/></svg>
<div class="t" style="left:55.4px;top:535.3px;font-size:15px;line-height:15px;color:#1e1e1e;">Page Control</div>
<svg style="left:23px;top:564px;" width="17" height="6" viewBox="0 0 17 6"><rect x="0" y="1" width="16" height="4" fill="#4b1547"/><rect x="9" y="2" width="6" height="2" fill="#d9c6d6"/></svg>
<div class="t" style="left:55.4px;top:560.3px;font-size:15px;line-height:15px;color:#1e1e1e;">Progress View</div>
<svg style="left:23px;top:587px;" width="17" height="9" viewBox="0 0 17 9"><rect x="0" y="0" width="16" height="8" fill="#4b1547"/><rect x="2" y="2" width="3" height="4" fill="#e6dce6"/><rect x="6.5" y="2" width="3" height="4" fill="#e6dce6"/><rect x="11" y="2" width="3" height="4" fill="#e6dce6"/></svg>
<div class="t" style="left:55.4px;top:585.3px;font-size:15px;line-height:15px;color:#1e1e1e;">Segmented Control</div>
<svg style="left:23px;top:612px;" width="17" height="10" viewBox="0 0 17 10"><rect x="0" y="4" width="16" height="2" fill="#4b1547"/><circle cx="10" cy="5" r="3.5" fill="#c9b2c6" stroke="#4b1547" stroke-width="1.5"/></svg>
<div class="t" style="left:55.4px;top:610.3px;font-size:15px;line-height:15px;color:#1e1e1e;">Slider</div>
<svg style="left:23px;top:637px;" width="17" height="9" viewBox="0 0 17 9"><rect x="0" y="0" width="16" height="8" fill="#4b1547"/><rect x="2" y="2" width="5" height="4" fill="#e6dce6"/><rect x="9" y="2" width="5" height="4" fill="#e6dce6"/></svg>
<div class="t" style="left:55.4px;top:635.3px;font-size:15px;line-height:15px;color:#1e1e1e;">Stepper</div>
<svg style="left:23px;top:662px;" width="17" height="9" viewBox="0 0 17 9"><rect x="0" y="0" width="16" height="8" rx="4" fill="#4b1547"/><circle cx="11.5" cy="4" r="3" fill="#fff"/></svg>
<div class="t" style="left:55.4px;top:660.3px;font-size:15px;line-height:15px;color:#1e1e1e;">Switch</div>
<svg style="left:23px;top:687px;" width="17" height="9" viewBox="0 0 17 9"><rect x="0" y="0" width="16" height="8.5" fill="#4b1547"/><rect x="2" y="2" width="12" height="4.5" fill="#e8e8e8"/></svg>
<div class="t" style="left:55.4px;top:685.3px;font-size:15px;line-height:15px;color:#1e1e1e;">Text Field</div>
<svg style="left:8px;top:711px;" width="9" height="9" viewBox="0 0 9 9"><path d="M8.5 0.5 L8.5 8.5 L0.5 8.5 Z" fill="#1e1e1e"/></svg>
<div class="t" style="left:23.3px;top:709.3px;font-size:15px;line-height:15px;color:#1e1e1e;">Data Views</div>
<svg style="left:27px;top:735px;" width="9" height="13" viewBox="0 0 9 13"><path d="M0.5 0.5 L0.5 9 L2.8 7 L5 11.5 L7 10.5 L5 6.5 L8 6.2 Z" fill="#424242"/></svg>
<div class="t" style="left:55.4px;top:734.3px;font-size:15px;line-height:15px;color:#1e1e1e;">Pointer</div>
<svg style="left:26px;top:761px;" width="11" height="11" viewBox="0 0 11 11"><rect x="0" y="0" width="10" height="10" fill="#4b1547"/><rect x="2" y="3" width="6" height="1" fill="#c9b2c6"/><rect x="2" y="6" width="6" height="1" fill="#c9b2c6"/></svg>
<div class="t" style="left:55.4px;top:759.3px;font-size:15px;line-height:15px;color:#1e1e1e;">Collection Reusable View</div>
<svg style="left:26px;top:786px;" width="11" height="11" viewBox="0 0 11 11"><rect x="0" y="0" width="10" height="10" fill="#4b1547"/><rect x="1.5" y="1.5" width="1.6" height="1.6" fill="#b7a0c9"/><rect x="1.5" y="4.1" width="1.6" height="1.6" fill="#b7a0c9"/><rect x="1.5" y="6.7" width="1.6" height="1.6" fill="#b7a0c9"/><rect x="4.1" y="1.5" width="1.6" height="1.6" fill="#b7a0c9"/><rect x="4.1" y="4.1" width="1.6" height="1.6" fill="#b7a0c9"/><rect x="4.1" y="6.7" width="1.6" height="1.6" fill="#b7a0c9"/><rect x="6.7" y="1.5" width="1.6" height="1.6" fill="#b7a0c9"/><rect x="6.7" y="4.1" width="1.6" height="1.6" fill="#b7a0c9"/><rect x="6.7" y="6.7" width="1.6" height="1.6" fill="#b7a0c9"/></svg>
<div class="t" style="left:55.4px;top:784.3px;font-size:15px;line-height:15px;color:#1e1e1e;">Collection View</div>
<svg style="left:26px;top:811px;" width="11" height="11" viewBox="0 0 11 11"><rect x="0" y="0" width="10" height="10" fill="#4b1547"/><rect x="1.5" y="1.5" width="1.6" height="1.6" fill="#7a4a78"/><rect x="1.5" y="4.1" width="1.6" height="1.6" fill="#7a4a78"/><rect x="1.5" y="6.7" width="1.6" height="1.6" fill="#7a4a78"/><rect x="4.1" y="1.5" width="1.6" height="1.6" fill="#7a4a78"/><rect x="4.1" y="4.1" width="1.6" height="1.6" fill="#7a4a78"/><rect x="4.1" y="6.7" width="1.6" height="1.6" fill="#7a4a78"/><rect x="6.7" y="1.5" width="1.6" height="1.6" fill="#7a4a78"/><rect x="6.7" y="4.1" width="1.6" height="1.6" fill="#7a4a78"/><rect x="6.7" y="6.7" width="1.6" height="1.6" fill="#7a4a78"/></svg>
<div class="t" style="left:55.4px;top:809.3px;font-size:15px;line-height:15px;color:#1e1e1e;">Collection View Cell</div>
<svg style="left:26px;top:836px;" width="11" height="11" viewBox="0 0 11 11"><rect x="0" y="0" width="10" height="10" fill="#4b1547"/><rect x="1" y="4" width="8" height="2" fill="#c9b2c6"/></svg>
<div class="t" style="left:55.4px;top:834.3px;font-size:15px;line-height:15px;color:#1e1e1e;">Date Picker</div>
<svg style="left:26px;top:861px;" width="11" height="11" viewBox="0 0 11 11"><rect x="0" y="0" width="10" height="10" fill="#4b1547"/><path d="M9 7 L6 10 L0 10 Z" fill="#f5f5f5"/><rect x="3" y="2" width="5" height="3" fill="#c9b2c6"/></svg>
<div class="t" style="left:55.4px;top:859.3px;font-size:15px;line-height:15px;color:#1e1e1e;">iAd Banner View</div>
<svg style="left:26px;top:886px;" width="11" height="11" viewBox="0 0 11 11"><rect x="0" y="0" width="10" height="10" fill="#4b1547"/><rect x="2" y="2" width="6" height="6" fill="none" stroke="#c9b2c6" stroke-width="1"/></svg>
<div class="t" style="left:55.4px;top:884.3px;font-size:15px;line-height:15px;color:#1e1e1e;">Image View</div>
<svg style="left:26px;top:911px;" width="11" height="11" viewBox="0 0 11 11"><rect x="0" y="0" width="10" height="10" fill="#4b1547"/><rect x="2" y="2" width="6" height="6" fill="none" stroke="#c9b2c6" stroke-width="1"/><rect x="4" y="4" width="2" height="2" fill="#c9b2c6"/></svg>
<div class="t" style="left:55.4px;top:909.3px;font-size:15px;line-height:15px;color:#1e1e1e;">Map Kit View</div>
<svg style="left:26px;top:936px;" width="11" height="11" viewBox="0 0 11 11"><path d="M5 0 L5 5 M0.5 9 L5 5 L9.5 9" stroke="#4b1547" stroke-width="2.5" fill="none"/></svg>
<div class="t" style="left:55.4px;top:934.3px;font-size:15px;line-height:15px;color:#1e1e1e;">OpenGL ES View</div>
<div style="left:111px;top:961px;width:67px;height:25px;background:#f5f5f5;"></div>
<div style="left:110px;top:961px;width:1px;height:25px;background:#cccedb;"></div>
<div style="left:178px;top:961px;width:1px;height:25px;background:#cccedb;"></div>
<div class="t" style="left:5.5px;top:965.8px;font-size:15px;line-height:15px;color:#444444;transform:scaleX(0.949);transform-origin:0 0;">Server Explorer</div>
<div class="t" style="left:117.4px;top:965.8px;font-size:15px;line-height:15px;color:#0e70c0;transform:scaleX(1.056);transform-origin:0 0;">Toolbox</div>
<div style="left:255px;top:98px;width:251px;height:27px;background:#cccedb;"></div>
<div class="t" style="left:260.5px;top:105.3px;font-size:15px;line-height:15px;color:#6d6d6d;">MainStoryboard.storyboard*</div>
<svg style="left:461px;top:106px;" width="12" height="10" viewBox="0 0 12 10"><path d="M0 5 L5 5 M5 1 L5 9 M5 2 L11 2 L11 8 L5 8 M5 6 L11 6" stroke="#6d6d6d" stroke-width="1.3" fill="none"/></svg>
<svg style="left:485px;top:106px;" width="12" height="12" viewBox="0 0 12 12"><path d="M1 1 L11 11 M11 1 L1 11" stroke="#6d6d6d" stroke-width="1.8"/></svg>
<svg style="left:1478px;top:110px;" width="10" height="6" viewBox="0 0 10 6"><path d="M0 0 L10 0 L5 6 Z" fill="#717171"/></svg>
<div style="left:255px;top:124px;width:1237px;height:2px;background:#cccedb;"></div>
<div style="left:255px;top:126px;width:1237px;height:54px;background:#fff;"></div>
<div style="left:255px;top:180px;width:1237px;height:1px;background:#9a9a9a;"></div>
<div style="left:255px;top:181px;width:1237px;height:1px;background:#dcdcdc;"></div>
<svg style="left:261px;top:132px;" width="13" height="20" viewBox="0 0 13 20"><rect x="1" y="1" width="11" height="18" rx="3" fill="#fff" stroke="#666" stroke-width="2"/><rect x="3.5" y="5" width="6" height="10" fill="#fff" stroke="#666" stroke-width="1"/><rect x="5.0" y="16.5" width="3" height="1" fill="#666"/></svg>
<div style="left:280px;top:126px;width:18px;height:33px;background:#bcdcf0;border:1px solid #2c5d87;box-sizing:border-box;"></div>
<svg style="left:283px;top:131px;" width="13" height="22" viewBox="0 0 13 22"><rect x="1" y="1" width="11" height="20" rx="3" fill="#bcdcf0" stroke="#666" stroke-width="2"/><rect x="3.5" y="5" width="6" height="12" fill="#bcdcf0" stroke="#666" stroke-width="1"/><rect x="5.0" y="18.5" width="3" height="1" fill="#666"/></svg>
<div style="left:305px;top:129px;width:1px;height:45px;background:#cccedb;"></div>
<div style="left:314px;top:126px;width:32px;height:33px;background:#bcdcf0;border:1px solid #2c5d87;box-sizing:border-box;"></div>
<svg style="left:323px;top:131px;" width="13" height="22" viewBox="0 0 13 22"><rect x="1" y="1" width="11" height="20" rx="3" fill="#bcdcf0" stroke="#666" stroke-width="2"/><rect x="3.5" y="5" width="6" height="12" fill="#bcdcf0" stroke="#666" stroke-width="1"/><rect x="5.0" y="18.5" width="3" height="1" fill="#666"/></svg>
<svg style="left:358px;top:136px;" width="21" height="13" viewBox="0 0 21 13"><rect x="1" y="1" width="19" height="11" rx="3" fill="#fff" stroke="#666" stroke-width="2"/><rect x="5" y="3.5" width="11" height="6" fill="#fff" stroke="#666" stroke-width="1"/><rect x="2.5" y="5" width="1" height="3" fill="#666"/></svg>
<div style="left:397px;top:129px;width:1px;height:45px;background:#cccedb;"></div>
<div class="t" style="left:417.0px;top:135.0px;font-size:16px;line-height:16px;color:#1e1e1e;">6</div>
<div style="left:440px;top:126px;width:31px;height:33px;background:#bcdcf0;border:1px solid #2c5d87;box-sizing:border-box;"></div>
<div class="t" style="left:451.5px;top:135.0px;font-size:16px;line-height:16px;color:#1e1e1e;">7</div>
<div style="left:480px;top:129px;width:1px;height:45px;background:#cccedb;"></div>
<svg style="left:490px;top:133px;" width="28" height="19" viewBox="0 0 28 19"><rect x="1" y="1" width="2.5" height="17" fill="#777"/><rect x="24.5" y="1" width="2.5" height="17" fill="#777"/><path d="M5 9.5 L10 9.5 M12 6.5 L12 12.5 M9 9.5 L15 9.5 M18 9.5 L23 9.5 M16 9.5 L16 9.5" stroke="#777" stroke-width="2"/></svg>
<svg style="left:524px;top:133px;" width="27" height="19" viewBox="0 0 27 19"><rect x="1" y="1" width="2.5" height="17" fill="#777"/><rect x="23.5" y="1" width="2.5" height="17" fill="#777"/><path d="M5 9.5 L8 9.5 M19 9.5 L22 9.5 M10.5 7 L15.5 12 M15.5 7 L10.5 12" stroke="#777" stroke-width="2"/></svg>
<svg style="left:558px;top:133px;" width="22" height="19" viewBox="0 0 22 19"><rect x="1" y="1" width="19.5" height="17" fill="none" stroke="#777" stroke-width="2.5"/><path d="M9 7 L15 7 L15 13" stroke="#999" stroke-width="1" stroke-dasharray="2 1" fill="none"/></svg>
<div class="t" style="left:267.0px;top:164.7px;font-size:11px;line-height:11px;color:#1e1e1e;transform:scaleX(0.887);transform-origin:0 0;">SIZE</div>
<div class="t" style="left:314.0px;top:164.7px;font-size:11px;line-height:11px;color:#1e1e1e;transform:scaleX(1.015);transform-origin:0 0;">ORIENTATION</div>
<div class="t" style="left:405.0px;top:164.7px;font-size:11px;line-height:11px;color:#1e1e1e;transform:scaleX(0.943);transform-origin:0 0;">iOS VERSION</div>
<div class="t" style="left:497.3px;top:164.7px;font-size:11px;line-height:11px;color:#1e1e1e;transform:scaleX(0.973);transform-origin:0 0;">CONSTRAINTS</div>
<div class="t" style="left:1401.0px;top:164.7px;font-size:11px;line-height:11px;color:#1e1e1e;transform:scaleX(1.024);transform-origin:0 0;">ZOOM</div>
<svg style="left:1355px;top:133px;" width="18" height="18" viewBox="0 0 18 18"><path d="M1.2 5.5 L1.2 1.2 L5.5 1.2 M12.5 1.2 L16.8 1.2 L16.8 5.5 M16.8 12.5 L16.8 16.8 L12.5 16.8 M5.5 16.8 L1.2 16.8 L1.2 12.5" stroke="#777" stroke-width="2.4" fill="none"/></svg>
<svg style="left:1391px;top:133px;" width="18" height="18" viewBox="0 0 18 18"><rect x="1.2" y="1.2" width="15.6" height="15.6" fill="none" stroke="#777" stroke-width="2.4"/><rect x="4.5" y="8" width="9" height="2.2" fill="#777"/></svg>
<svg style="left:1427px;top:133px;" width="18" height="18" viewBox="0 0 18 18"><rect x="1.2" y="1.2" width="15.6" height="15.6" fill="none" stroke="#777" stroke-width="2.4"/><rect x="5" y="8" width="8" height="2.2" fill="#777"/><rect x="7.9" y="5" width="2.2" height="8" fill="#777"/></svg>
<div style="left:1456px;top:126px;width:33px;height:33px;background:#f0f0f0;border:1px solid #cccccc;box-sizing:border-box;"></div>
<svg style="left:1464px;top:133px;" width="18" height="18" viewBox="0 0 18 18"><rect x="1.2" y="1.2" width="15.6" height="15.6" fill="none" stroke="#777" stroke-width="2.5"/><rect x="5" y="5" width="2.5" height="9" fill="#777"/><rect x="11.5" y="5" width="2.5" height="9" fill="#777"/><rect x="9" y="7" width="1.5" height="1.5" fill="#777"/><rect x="9" y="11" width="1.5" height="1.5" fill="#777"/></svg>
<div style="left:255px;top:182px;width:1217px;height:783px;background:#fff;"></div>
<div style="left:1472px;top:184px;width:21px;height:781px;background:#e8e8ec;"></div>
<svg style="left:1476px;top:191px;" width="13" height="7" viewBox="0 0 13 7"><path d="M0 6.5 L6.5 0 L13 6.5 Z" fill="#868999"/></svg>
<svg style="left:1476px;top:950px;" width="13" height="7" viewBox="0 0 13 7"><path d="M0 0 L6.5 6.5 L13 0 Z" fill="#868999"/></svg>
<div style="left:1477px;top:205px;width:11px;height:695px;background:#d0d1d7;"></div>
<div style="left:255px;top:965px;width:1217px;height:21px;background:#e8e8ec;"></div>
<svg style="left:261px;top:970px;" width="8" height="11" viewBox="0 0 8 11"><path d="M7.5 0 L7.5 11 L0 5.5 Z" fill="#868999"/></svg>
<svg style="left:1457px;top:970px;" width="8" height="11" viewBox="0 0 8 11"><path d="M0 0 L0 11 L7.5 5.5 Z" fill="#868999"/></svg>
<div style="left:276px;top:970px;width:1174px;height:11px;background:#d0d1d7;"></div>
<div style="left:1472px;top:965px;width:21px;height:21px;background:#f0f0f0;"></div>
<div style="left:707.5px;top:220px;width:402px;height:746px;border:1px solid #d2d2d2;border-bottom:none;border-radius:2px 2px 0 0;box-sizing:border-box;background:#fff;box-shadow:0 0 1.5px 0.5px #cfcfcf;"></div>
<div class="t" style="left:716.3px;top:226.7px;font-size:15.5px;line-height:15.5px;color:#1a1a1a;font-weight:bold;transform:scaleX(0.930);transform-origin:0 0;">Carrier</div>
<svg style="left:771px;top:228px;" width="17" height="13" viewBox="0 0 17 13"><path d="M1 5 C5 0.5,12 0.5,16 5" stroke="#1a1a1a" stroke-width="2" fill="none"/><path d="M3.8 7.8 C6.5 5,10.5 5,13.2 7.8" stroke="#1a1a1a" stroke-width="2" fill="none"/><path d="M5.5 10 L8.5 12.5 L11.5 10 C9.5 8.5,7.5 8.5,5.5 10 Z" fill="#1a1a1a"/></svg>
<svg style="left:1070px;top:227px;" width="34" height="14" viewBox="0 0 34 14"><rect x="1" y="1" width="29" height="11.5" rx="3" fill="#fff" stroke="#444" stroke-width="1.5"/><rect x="3" y="3" width="25" height="7.5" rx="1.5" fill="#000"/><rect x="30.5" y="4.5" width="2" height="4.5" fill="#444"/></svg>
<div style="left:742px;top:287px;width:336px;height:30px;background:#d2dfe9;border:1.5px solid #3f74a4;box-sizing:border-box;"></div>
<div class="t" style="left:743.7px;top:290.7px;font-size:20px;line-height:20px;color:#1c2228;transform:scaleX(1.062);transform-origin:0 0;-webkit-text-stroke:0.25px #1c2228;">Enter a Phoneword:</div>
<svg style="left:736px;top:280.5px;" width="10" height="10" viewBox="0 0 10 10"><circle cx="5" cy="5" r="4" fill="#fff" stroke="#888" stroke-width="1.2"/></svg>
<svg style="left:905px;top:279.5px;" width="10" height="10" viewBox="0 0 10 10"><circle cx="5" cy="5" r="4" fill="#fff" stroke="#888" stroke-width="1.2"/></svg>
<svg style="left:1073.5px;top:280.5px;" width="10" height="10" viewBox="0 0 10 10"><circle cx="5" cy="5" r="4" fill="#fff" stroke="#888" stroke-width="1.2"/></svg>
<svg style="left:734.5px;top:296.5px;" width="10" height="10" viewBox="0 0 10 10"><circle cx="5" cy="5" r="4" fill="#fff" stroke="#888" stroke-width="1.2"/></svg>
<svg style="left:1073.5px;top:296.5px;" width="10" height="10" viewBox="0 0 10 10"><circle cx="5" cy="5" r="4" fill="#fff" stroke="#888" stroke-width="1.2"/></svg>
<svg style="left:736px;top:312px;" width="10" height="10" viewBox="0 0 10 10"><circle cx="5" cy="5" r="4" fill="#fff" stroke="#888" stroke-width="1.2"/></svg>
<svg style="left:905px;top:312px;" width="10" height="10" viewBox="0 0 10 10"><circle cx="5" cy="5" r="4" fill="#fff" stroke="#888" stroke-width="1.2"/></svg>
<svg style="left:1073.5px;top:312px;" width="10" height="10" viewBox="0 0 10 10"><circle cx="5" cy="5" r="4" fill="#fff" stroke="#888" stroke-width="1.2"/></svg>
<div style="left:709px;top:931px;width:399px;height:34px;background:linear-gradient(#a6a6a6,#5a5a5a);"></div>
<svg style="left:716px;top:938px;" width="33" height="28" viewBox="0 0 33 28"><circle cx="15.5" cy="15.5" r="15" fill="#6a6a6a" stroke="#c98a2a" stroke-width="1.5"/><rect x="8" y="8" width="15" height="15" rx="3" fill="none" stroke="#222" stroke-width="1.5" stroke-dasharray="2 1.5"/></svg>
<svg style="left:754px;top:938px;" width="30" height="28" viewBox="0 0 30 28"><rect x="0" y="0" width="29.5" height="28" rx="3" fill="#5fa35a"/><path d="M15 6 L7 6 L7 22 L15 22 M11 14 L22 14 M18 9.5 L23 14 L18 18.5" stroke="#fff" stroke-width="2.5" fill="none"/></svg>
<svg style="left:580px;top:570px;" width="125" height="57" viewBox="0 0 125 57"><defs><filter id="sh" x="-20%" y="-20%" width="140%" height="140%"><feGaussianBlur stdDeviation="1.2"/></filter></defs><path d="M85.2 3 L121.3 28.1 L85.2 53.1 L85.2 33 L43 33 A20.6 20.6 0 1 1 43 22.6 L85.2 22.6 Z" fill="#aaa" filter="url(#sh)" opacity=".6"/><path d="M85.2 3 L121.3 28.1 L85.2 53.1 L85.2 33 L43 33 A20.6 20.6 0 1 1 43 22.6 L85.2 22.6 Z" fill="#ededed" stroke="#777" stroke-width="1"/><rect x="15.5" y="18.5" width="16" height="19" rx="1.5" fill="#f4f4f4" stroke="#666" stroke-width="1.5"/><path d="M20.5 22 L20.5 33" stroke="#666" stroke-width="1.3"/><path d="M21 22 L26 23 L24.5 25.5 L26.5 27 L21 27" fill="#777"/></svg>
<div style="left:1495px;top:182px;width:1px;height:804px;background:#e0e0e6;"></div>
<div class="t" style="left:1504.3px;top:105.3px;font-size:15px;line-height:15px;color:#444444;">Solution Explorer</div>
<svg style="left:1630px;top:110px;" width="203" height="5" viewBox="0 0 203 5"><rect x="0" y="0" width="1" height="1" fill="#8e8e96"/><rect x="2" y="2" width="1" height="1" fill="#8e8e96" opacity=".55"/><rect x="0" y="4" width="1" height="1" fill="#8e8e96"/><rect x="5" y="0" width="1" height="1" fill="#8e8e96"/><rect x="7" y="2" width="1" height="1" fill="#8e8e96" opacity=".55"/><rect x="5" y="4" width="1" height="1" fill="#8e8e96"/><rect x="10" y="0" width="1" height="1" fill="#8e8e96"/><rect x="12" y="2" width="1" height="1" fill="#8e8e96" opacity=".55"/><rect x="10" y="4" width="1" height="1" fill="#8e8e96"/><rect x="15" y="0" width="1" height="1" fill="#8e8e96"/><rect x="17" y="2" width="1" height="1" fill="#8e8e96" opacity=".55"/><rect x="15" y="4" width="1" height="1" fill="#8e8e96"/><rect x="20" y="0" width="1" height="1" fill="#8e8e96"/><rect x="22" y="2" width="1" height="1" fill="#8e8e96" opacity=".55"/><rect x="20" y="4" width="1" height="1" fill="#8e8e96"/><rect x="25" y="0" width="1" height="1" fill="#8e8e96"/><rect x="27" y="2" width="1" height="1" fill="#8e8e96" opacity=".55"/><rect x="25" y="4" width="1" height="1" fill="#8e8e96"/><rect x="30" y="0" width="1" height="1" fill="#8e8e96"/><rect x="32" y="2" width="1" height="1" fill="#8e8e96" opacity=".55"/><rect x="30" y="4" width="1" height="1" fill="#8e8e96"/><rect x="35" y="0" width="1" height="1" fill="#8e8e96"/><rect x="37" y="2" width="1" height="1" fill="#8e8e96" opacity=".55"/><rect x="35" y="4" width="1" height="1" fill="#8e8e96"/><rect x="40" y="0" width="1" height="1" fill="#8e8e96"/><rect x="42" y="2" width="1" height="1" fill="#8e8e96" opacity=".55"/><rect x="40" y="4" width="1" height="1" fill="#8e8e96"/><rect x="45" y="0" width="1" height="1" fill="#8e8e96"/><rect x="47" y="2" width="1" height="1" fill="#8e8e96" opacity=".55"/><rect x="45" y="4" width="1" height="1" fill="#8e8e96"/><rect x="50" y="0" width="1" height="1" fill="#8e8e96"/><rect x="52" y="2" width="1" height="1" fill="#8e8e96" opacity=".55"/><rect x="50" y="4" width="1" height="1" fill="#8e8e96"/><rect x="55" y="0" width="1" height="1" fill="#8e8e96"/><rect x="57" y="2" width="1" height="1" fill="#8e8e96" opacity=".55"/><rect x="55" y="4" width="1" height="1" fill="#8e8e96"/><rect x="60" y="0" width="1" height="1" fill="#8e8e96"/><rect x="62" y="2" width="1" height="1" fill="#8e8e96" opacity=".55"/><rect x="60" y="4" width="1" height="1" fill="#8e8e96"/><rect x="65" y="0" width="1" height="1" fill="#8e8e96"/><rect x="67" y="2" width="1" height="1" fill="#8e8e96" opacity=".55"/><rect x="65" y="4" width="1" height="1" fill="#8e8e96"/><rect x="70" y="0" width="1" height="1" fill="#8e8e96"/><rect x="72" y="2" width="1" height="1" fill="#8e8e96" opacity=".55"/><rect x="70" y="4" width="1" height="1" fill="#8e8e96"/><rect x="75" y="0" width="1" height="1" fill="#8e8e96"/><rect x="77" y="2" width="1" height="1" fill="#8e8e96" opacity=".55"/><rect x="75" y="4" width="1" height="1" fill="#8e8e96"/><rect x="80" y="0" width="1" height="1" fill="#8e8e96"/><rect x="82" y="2" width="1" height="1" fill="#8e8e96" opacity=".55"/><rect x="80" y="4" width="1" height="1" fill="#8e8e96"/><rect x="85" y="0" width="1" height="1" fill="#8e8e96"/><rect x="87" y="2" width="1" height="1" fill="#8e8e96" opacity=".55"/><rect x="85" y="4" width="1" height="1" fill="#8e8e96"/><rect x="90" y="0" width="1" height="1" fill="#8e8e96"/><rect x="92" y="2" width="1" height="1" fill="#8e8e96" opacity=".55"/><rect x="90" y="4" width="1" height="1" fill="#8e8e96"/><rect x="95" y="0" width="1" height="1" fill="#8e8e96"/><rect x="97" y="2" width="1" height="1" fill="#8e8e96" opacity=".55"/><rect x="95" y="4" width="1" height="1" fill="#8e8e96"/><rect x="100" y="0" width="1" height="1" fill="#8e8e96"/><rect x="102" y="2" width="1" height="1" fill="#8e8e96" opacity=".55"/><rect x="100" y="4" width="1" height="1" fill="#8e8e96"/><rect x="105" y="0" width="1" height="1" fill="#8e8e96"/><rect x="107" y="2" width="1" height="1" fill="#8e8e96" opacity=".55"/><rect x="105" y="4" width="1" height="1" fill="#8e8e96"/><rect x="110" y="0" width="1" height="1" fill="#8e8e96"/><rect x="112" y="2" width="1" height="1" fill="#8e8e96" opacity=".55"/><rect x="110" y="4" width="1" height="1" fill="#8e8e96"/><rect x="115" y="0" width="1" height="1" fill="#8e8e96"/><rect x="117" y="2" width="1" height="1" fill="#8e8e96" opacity=".55"/><rect x="115" y="4" width="1" height="1" fill="#8e8e96"/><rect x="120" y="0" width="1" height="1" fill="#8e8e96"/><rect x="122" y="2" width="1" height="1" fill="#8e8e96" opacity=".55"/><rect x="120" y="4" width="1" height="1" fill="#8e8e96"/><rect x="125" y="0" width="1" height="1" fill="#8e8e96"/><rect x="127" y="2" width="1" height="1" fill="#8e8e96" opacity=".55"/><rect x="125" y="4" width="1" height="1" fill="#8e8e96"/><rect x="130" y="0" width="1" height="1" fill="#8e8e96"/><rect x="132" y="2" width="1" height="1" fill="#8e8e96" opacity=".55"/><rect x="130" y="4" width="1" height="1" fill="#8e8e96"/><rect x="135" y="0" width="1" height="1" fill="#8e8e96"/><rect x="137" y="2" width="1" height="1" fill="#8e8e96" opacity=".55"/><rect x="135" y="4" width="1" height="1" fill="#8e8e96"/><rect x="140" y="0" width="1" height="1" fill="#8e8e96"/><rect x="142" y="2" width="1" height="1" fill="#8e8e96" opacity=".55"/><rect x="140" y="4" width="1" height="1" fill="#8e8e96"/><rect x="145" y="0" width="1" height="1" fill="#8e8e96"/><rect x="147" y="2" width="1" height="1" fill="#8e8e96" opacity=".55"/><rect x="145" y="4" width="1" height="1" fill="#8e8e96"/><rect x="150" y="0" width="1" height="1" fill="#8e8e96"/><rect x="152" y="2" width="1" height="1" fill="#8e8e96" opacity=".55"/><rect x="150" y="4" width="1" height="1" fill="#8e8e96"/><rect x="155" y="0" width="1" height="1" fill="#8e8e96"/><rect x="157" y="2" width="1" height="1" fill="#8e8e96" opacity=".55"/><rect x="155" y="4" width="1" height="1" fill="#8e8e96"/><rect x="160" y="0" width="1" height="1" fill="#8e8e96"/><rect x="162" y="2" width="1" height="1" fill="#8e8e96" opacity=".55"/><rect x="160" y="4" width="1" height="1" fill="#8e8e96"/><rect x="165" y="0" width="1" height="1" fill="#8e8e96"/><rect x="167" y="2" width="1" height="1" fill="#8e8e96" opacity=".55"/><rect x="165" y="4" width="1" height="1" fill="#8e8e96"/><rect x="170" y="0" width="1" height="1" fill="#8e8e96"/><rect x="172" y="2" width="1" height="1" fill="#8e8e96" opacity=".55"/><rect x="170" y="4" width="1" height="1" fill="#8e8e96"/><rect x="175" y="0" width="1" height="1" fill="#8e8e96"/><rect x="177" y="2" width="1" height="1" fill="#8e8e96" opacity=".55"/><rect x="175" y="4" width="1" height="1" fill="#8e8e96"/><rect x="180" y="0" width="1" height="1" fill="#8e8e96"/><rect x="182" y="2" width="1" height="1" fill="#8e8e96" opacity=".55"/><rect x="180" y="4" width="1" height="1" fill="#8e8e96"/><rect x="185" y="0" width="1" height="1" fill="#8e8e96"/><rect x="187" y="2" width="1" height="1" fill="#8e8e96" opacity=".55"/><rect x="185" y="4" width="1" height="1" fill="#8e8e96"/><rect x="190" y="0" width="1" height="1" fill="#8e8e96"/><rect x="192" y="2" width="1" height="1" fill="#8e8e96" opacity=".55"/><rect x="190" y="4" width="1" height="1" fill="#8e8e96"/><rect x="195" y="0" width="1" height="1" fill="#8e8e96"/><rect x="197" y="2" width="1" height="1" fill="#8e8e96" opacity=".55"/><rect x="195" y="4" width="1" height="1" fill="#8e8e96"/></svg>
<svg style="left:1842px;top:109px;" width="10" height="5" viewBox="0 0 10 5"><path d="M0 0 L10 0 L5 5 Z" fill="#1e1e1e"/></svg>
<svg style="left:1863px;top:105px;" width="9" height="14" viewBox="0 0 9 14"><path d="M1.5 0.5 L7.5 0.5 L7.5 8 L1.5 8 Z" fill="none" stroke="#1e1e1e" stroke-width="1.3"/><rect x="5" y="1" width="2.5" height="7" fill="#1e1e1e"/><rect x="0" y="7.5" width="9" height="1.3" fill="#1e1e1e"/><rect x="4" y="8.5" width="1.2" height="5.5" fill="#1e1e1e"/></svg>
<svg style="left:1883px;top:107px;" width="12" height="10" viewBox="0 0 12 10"><path d="M0.5 0.3 L11.5 9.7 M11.5 0.3 L0.5 9.7" stroke="#1e1e1e" stroke-width="1.6"/></svg>
<svg style="left:1510px;top:135px;" width="17" height="17" viewBox="0 0 17 17"><circle cx="8" cy="8" r="7.5" fill="#c6c6c6"/><path d="M4 8 L8 4.5 M4 8 L8 11.5 M4 8 L12.5 8" stroke="#eeeef2" stroke-width="2"/></svg>
<svg style="left:1538px;top:135px;" width="17" height="17" viewBox="0 0 17 17"><circle cx="8.5" cy="8" r="7.5" fill="#c6c6c6"/><path d="M13 8 L9 4.5 M13 8 L9 11.5 M13 8 L4.5 8" stroke="#eeeef2" stroke-width="2"/></svg>
<svg style="left:1565px;top:134px;" width="20" height="19" viewBox="0 0 20 19"><path d="M1 9 L10 1 L19 9" stroke="#424242" stroke-width="2.2" fill="none"/><path d="M4 8 L4 18 L8 18 L8 12 L12 12 L12 18 L16 18 L16 8" stroke="#424242" stroke-width="2" fill="none"/><rect x="14" y="2" width="2" height="5" fill="#424242"/></svg>
<div style="left:1593px;top:130px;width:1px;height:25px;background:#cccedb;"></div>
<svg style="left:1604px;top:133px;" width="19" height="20" viewBox="0 0 19 20"><circle cx="11" cy="11.5" r="6.5" fill="none" stroke="#424242" stroke-width="2"/><path d="M11 8 L11 11.5 L14 11.5" stroke="#424242" stroke-width="1.5" fill="none"/><path d="M1 1 L5 1 M3 1 L3 6" stroke="#424242" stroke-width="1.5"/></svg>
<svg style="left:1632px;top:141px;" width="8" height="5" viewBox="0 0 8 5"><path d="M0 0 L8 0 L4 4.5 Z" fill="#717171"/></svg>
<svg style="left:1649px;top:134px;" width="17" height="17" viewBox="0 0 17 17"><path d="M1 6 L13 6 M10 2 L14 6 M16 11 L4 11 M7 7 L3 11 L7 15" stroke="#424242" stroke-width="2" fill="none"/></svg>
<svg style="left:1676px;top:134px;" width="18" height="18" viewBox="0 0 18 18"><path d="M4 12 C1 8,3 3,8 2 M14 6 C17 10,15 15,10 16" stroke="#424242" stroke-width="2.5" fill="none"/><path d="M5 0 L10 2 L6 6 Z M13 12 L8 16 L12 18 Z" fill="#424242"/></svg>
<svg style="left:1704px;top:134px;" width="18" height="18" viewBox="0 0 18 18"><rect x="7" y="1" width="10" height="10" fill="none" stroke="#424242" stroke-width="1.5"/><rect x="4" y="4" width="10" height="10" fill="#eeeef2" stroke="#424242" stroke-width="1.5"/><rect x="1" y="7" width="10" height="10" fill="#eeeef2" stroke="#424242" stroke-width="2"/><rect x="3" y="11" width="6" height="2" fill="#1e6fc4"/></svg>
<svg style="left:1731px;top:133px;" width="20" height="20" viewBox="0 0 20 20"><path d="M1 1 L10 1 L10 12 L1 12 Z" fill="none" stroke="#888" stroke-width="1" stroke-dasharray="1.5 1.5"/><path d="M6 5 L14 5 L18 9 L18 19 L6 19 Z" fill="#eeeef2" stroke="#424242" stroke-width="2"/><path d="M9 11 L15 11 M9 14 L15 14" stroke="#424242" stroke-width="1.2"/></svg>
<div style="left:1759px;top:130px;width:1px;height:25px;background:#cccedb;"></div>
<svg style="left:1771px;top:134px;" width="17" height="17" viewBox="0 0 17 17"><path d="M2 15 L9 8" stroke="#424242" stroke-width="3.5" stroke-linecap="round"/><path d="M8 9 C6 5,9 1,14 2 L11 5 L13 7 L16 4 C17 9,13 11,9 9" fill="#424242"/></svg>
<div style="left:1793px;top:128px;width:28px;height:30px;background:#eeeef2;border:1px solid #3399ff;box-sizing:border-box;"></div>
<svg style="left:1797px;top:133px;" width="20" height="20" viewBox="0 0 20 20"><path d="M2 1 L9 1 L11 3 L18 3 L18 17 L7 17" stroke="#424242" stroke-width="2" fill="none"/><path d="M2 1 L2 10" stroke="#424242" stroke-width="2"/><circle cx="7" cy="13" r="3" fill="none" stroke="#1e6fc4" stroke-width="1.6"/><path d="M5 15.5 L1.5 19" stroke="#1e6fc4" stroke-width="2"/></svg>
<div style="left:1500px;top:161px;width:404px;height:28px;background:#fcfcfc;"></div>
<div class="t" style="left:1506.5px;top:168.3px;font-size:15px;line-height:15px;color:#717171;transform:scaleX(0.973);transform-origin:0 0;">Search Solution Explorer (Ctrl+;)</div>
<svg style="left:1868px;top:166px;" width="18" height="17" viewBox="0 0 18 17"><circle cx="11" cy="6.5" r="4.5" fill="none" stroke="#717171" stroke-width="2.2"/><path d="M8 10 L2.5 15.5" stroke="#717171" stroke-width="3" stroke-linecap="round"/></svg>
<svg style="left:1892px;top:173px;" width="8" height="5" viewBox="0 0 8 5"><path d="M0 0 L8 0 L4 4.5 Z" fill="#717171"/></svg>
<div style="left:1500px;top:189px;width:404px;height:94px;background:#f5f5f5;"></div>
<div style="left:1883px;top:194px;width:21px;height:89px;background:#e8e8ec;"></div>
<svg style="left:1887px;top:201px;" width="13" height="7" viewBox="0 0 13 7"><path d="M0 6.5 L6.5 0 L13 6.5 Z" fill="#868999"/></svg>
<svg style="left:1887px;top:268px;" width="13" height="7" viewBox="0 0 13 7"><path d="M0 0 L6.5 6.5 L13 0 Z" fill="#868999"/></svg>
<div style="left:1888px;top:215px;width:11px;height:13px;background:#d0d1d7;"></div>
<div style="left:1883px;top:189px;width:21px;height:5px;background:#e8e8ec;"></div>
<svg style="left:1512px;top:199px;" width="18" height="15" viewBox="0 0 18 15"><rect x="1" y="1" width="15" height="12" fill="none" stroke="#555" stroke-width="1.5"/><rect x="1" y="1" width="15" height="2.5" fill="#555"/><path d="M2 9 L5 11.5 L2 14 M5 9 L8 14" stroke="#555" stroke-width="1.5" fill="none"/></svg>
<div class="t" style="left:1535.0px;top:199.0px;font-size:15px;line-height:15px;color:#1e1e1e;">Solution &#x27;Phoneword&#x27; (1 project)</div>
<svg style="left:1513px;top:224px;" width="9" height="9" viewBox="0 0 9 9"><path d="M8.5 0.5 L8.5 8.5 L0.5 8.5 Z" fill="#1e1e1e"/></svg>
<svg style="left:1535px;top:221px;" width="17" height="17" viewBox="0 0 17 17"><rect x="0.5" y="0.5" width="16" height="16" fill="#f0f0f4" stroke="#888" stroke-width="1"/><rect x="0.5" y="0.5" width="16" height="3" fill="#6f9ed6"/><circle cx="8.5" cy="10" r="4" fill="#d0a0d8"/></svg>
<div class="t" style="left:1558.0px;top:222.0px;font-size:15px;line-height:15px;color:#1e1e1e;font-weight:bold;transform:scaleX(0.941);transform-origin:0 0;">Phoneword_iOS</div>
<svg style="left:1535px;top:248px;" width="9" height="12" viewBox="0 0 9 12"><path d="M1 1 L7.5 6 L1 11 Z" fill="none" stroke="#1e1e1e" stroke-width="1.3"/></svg>
<svg style="left:1560px;top:245px;" width="13" height="13" viewBox="0 0 13 13"><path d="M1.5 11.5 L6 7" stroke="#424242" stroke-width="2.5" stroke-linecap="round"/><path d="M5 8 C4 4,7 1,11 1.5 L8.5 4 L10 5.5 L12.5 3 C13 7,10 9,6 7" fill="#424242"/></svg>
<div class="t" style="left:1580.0px;top:245.0px;font-size:15px;line-height:15px;color:#1e1e1e;transform:scaleX(0.977);transform-origin:0 0;">Properties</div>
<svg style="left:1535px;top:271px;" width="9" height="12" viewBox="0 0 9 12"><path d="M1 1 L7.5 6 L1 11 Z" fill="none" stroke="#1e1e1e" stroke-width="1.3"/></svg>
<svg style="left:1558px;top:271px;" width="15" height="10" viewBox="0 0 15 10"><rect x="0" y="2.5" width="3" height="3" fill="#424242"/><rect x="3" y="3.5" width="4" height="1" fill="#424242"/><rect x="7" y="0.5" width="7" height="7" fill="#424242"/></svg>
<div class="t" style="left:1580.0px;top:268.0px;font-size:15px;line-height:15px;color:#1e1e1e;transform:scaleX(0.938);transform-origin:0 0;">References</div>
<div style="left:1500px;top:284px;width:404px;height:8px;background:#cccedb;"></div>
<div style="left:1500px;top:292px;width:404px;height:28px;background:#007acc;"></div>
<div class="t" style="left:1504.4px;top:298.8px;font-size:15px;line-height:15px;color:#ffffff;transform:scaleX(0.980);transform-origin:0 0;">Properties</div>
<svg style="left:1585px;top:304px;" width="247" height="5" viewBox="0 0 247 5"><rect x="0" y="0" width="1" height="1" fill="#8cc4ea"/><rect x="2" y="2" width="1" height="1" fill="#8cc4ea" opacity=".55"/><rect x="0" y="4" width="1" height="1" fill="#8cc4ea"/><rect x="5" y="0" width="1" height="1" fill="#8cc4ea"/><rect x="7" y="2" width="1" height="1" fill="#8cc4ea" opacity=".55"/><rect x="5" y="4" width="1" height="1" fill="#8cc4ea"/><rect x="10" y="0" width="1" height="1" fill="#8cc4ea"/><rect x="12" y="2" width="1" height="1" fill="#8cc4ea" opacity=".55"/><rect x="10" y="4" width="1" height="1" fill="#8cc4ea"/><rect x="15" y="0" width="1" height="1" fill="#8cc4ea"/><rect x="17" y="2" width="1" height="1" fill="#8cc4ea" opacity=".55"/><rect x="15" y="4" width="1" height="1" fill="#8cc4ea"/><rect x="20" y="0" width="1" height="1" fill="#8cc4ea"/><rect x="22" y="2" width="1" height="1" fill="#8cc4ea" opacity=".55"/><rect x="20" y="4" width="1" height="1" fill="#8cc4ea"/><rect x="25" y="0" width="1" height="1" fill="#8cc4ea"/><rect x="27" y="2" width="1" height="1" fill="#8cc4ea" opacity=".55"/><rect x="25" y="4" width="1" height="1" fill="#8cc4ea"/><rect x="30" y="0" width="1" height="1" fill="#8cc4ea"/><rect x="32" y="2" width="1" height="1" fill="#8cc4ea" opacity=".55"/><rect x="30" y="4" width="1" height="1" fill="#8cc4ea"/><rect x="35" y="0" width="1" height="1" fill="#8cc4ea"/><rect x="37" y="2" width="1" height="1" fill="#8cc4ea" opacity=".55"/><rect x="35" y="4" width="1" height="1" fill="#8cc4ea"/><rect x="40" y="0" width="1" height="1" fill="#8cc4ea"/><rect x="42" y="2" width="1" height="1" fill="#8cc4ea" opacity=".55"/><rect x="40" y="4" width="1" height="1" fill="#8cc4ea"/><rect x="45" y="0" width="1" height="1" fill="#8cc4ea"/><rect x="47" y="2" width="1" height="1" fill="#8cc4ea" opacity=".55"/><rect x="45" y="4" width="1" height="1" fill="#8cc4ea"/><rect x="50" y="0" width="1" height="1" fill="#8cc4ea"/><rect x="52" y="2" width="1" height="1" fill="#8cc4ea" opacity=".55"/><rect x="50" y="4" width="1" height="1" fill="#8cc4ea"/><rect x="55" y="0" width="1" height="1" fill="#8cc4ea"/><rect x="57" y="2" width="1" height="1" fill="#8cc4ea" opacity=".55"/><rect x="55" y="4" width="1" height="1" fill="#8cc4ea"/><rect x="60" y="0" width="1" height="1" fill="#8cc4ea"/><rect x="62" y="2" width="1" height="1" fill="#8cc4ea" opacity=".55"/><rect x="60" y="4" width="1" height="1" fill="#8cc4ea"/><rect x="65" y="0" width="1" height="1" fill="#8cc4ea"/><rect x="67" y="2" width="1" height="1" fill="#8cc4ea" opacity=".55"/><rect x="65" y="4" width="1" height="1" fill="#8cc4ea"/><rect x="70" y="0" width="1" height="1" fill="#8cc4ea"/><rect x="72" y="2" width="1" height="1" fill="#8cc4ea" opacity=".55"/><rect x="70" y="4" width="1" height="1" fill="#8cc4ea"/><rect x="75" y="0" width="1" height="1" fill="#8cc4ea"/><rect x="77" y="2" width="1" height="1" fill="#8cc4ea" opacity=".55"/><rect x="75" y="4" width="1" height="1" fill="#8cc4ea"/><rect x="80" y="0" width="1" height="1" fill="#8cc4ea"/><rect x="82" y="2" width="1" height="1" fill="#8cc4ea" opacity=".55"/><rect x="80" y="4" width="1" height="1" fill="#8cc4ea"/><rect x="85" y="0" width="1" height="1" fill="#8cc4ea"/><rect x="87" y="2" width="1" height="1" fill="#8cc4ea" opacity=".55"/><rect x="85" y="4" width="1" height="1" fill="#8cc4ea"/><rect x="90" y="0" width="1" height="1" fill="#8cc4ea"/><rect x="92" y="2" width="1" height="1" fill="#8cc4ea" opacity=".55"/><rect x="90" y="4" width="1" height="1" fill="#8cc4ea"/><rect x="95" y="0" width="1" height="1" fill="#8cc4ea"/><rect x="97" y="2" width="1" height="1" fill="#8cc4ea" opacity=".55"/><rect x="95" y="4" width="1" height="1" fill="#8cc4ea"/><rect x="100" y="0" width="1" height="1" fill="#8cc4ea"/><rect x="102" y="2" width="1" height="1" fill="#8cc4ea" opacity=".55"/><rect x="100" y="4" width="1" height="1" fill="#8cc4ea"/><rect x="105" y="0" width="1" height="1" fill="#8cc4ea"/><rect x="107" y="2" width="1" height="1" fill="#8cc4ea" opacity=".55"/><rect x="105" y="4" width="1" height="1" fill="#8cc4ea"/><rect x="110" y="0" width="1" height="1" fill="#8cc4ea"/><rect x="112" y="2" width="1" height="1" fill="#8cc4ea" opacity=".55"/><rect x="110" y="4" width="1" height="1" fill="#8cc4ea"/><rect x="115" y="0" width="1" height="1" fill="#8cc4ea"/><rect x="117" y="2" width="1" height="1" fill="#8cc4ea" opacity=".55"/><rect x="115" y="4" width="1" height="1" fill="#8cc4ea"/><rect x="120" y="0" width="1" height="1" fill="#8cc4ea"/><rect x="122" y="2" width="1" height="1" fill="#8cc4ea" opacity=".55"/><rect x="120" y="4" width="1" height="1" fill="#8cc4ea"/><rect x="125" y="0" width="1" height="1" fill="#8cc4ea"/><rect x="127" y="2" width="1" height="1" fill="#8cc4ea" opacity=".55"/><rect x="125" y="4" width="1" height="1" fill="#8cc4ea"/><rect x="130" y="0" width="1" height="1" fill="#8cc4ea"/><rect x="132" y="2" width="1" height="1" fill="#8cc4ea" opacity=".55"/><rect x="130" y="4" width="1" height="1" fill="#8cc4ea"/><rect x="135" y="0" width="1" height="1" fill="#8cc4ea"/><rect x="137" y="2" width="1" height="1" fill="#8cc4ea" opacity=".55"/><rect x="135" y="4" width="1" height="1" fill="#8cc4ea"/><rect x="140" y="0" width="1" height="1" fill="#8cc4ea"/><rect x="142" y="2" width="1" height="1" fill="#8cc4ea" opacity=".55"/><rect x="140" y="4" width="1" height="1" fill="#8cc4ea"/><rect x="145" y="0" width="1" height="1" fill="#8cc4ea"/><rect x="147" y="2" width="1" height="1" fill="#8cc4ea" opacity=".55"/><rect x="145" y="4" width="1" height="1" fill="#8cc4ea"/><rect x="150" y="0" width="1" height="1" fill="#8cc4ea"/><rect x="152" y="2" width="1" height="1" fill="#8cc4ea" opacity=".55"/><rect x="150" y="4" width="1" height="1" fill="#8cc4ea"/><rect x="155" y="0" width="1" height="1" fill="#8cc4ea"/><rect x="157" y="2" width="1" height="1" fill="#8cc4ea" opacity=".55"/><rect x="155" y="4" width="1" height="1" fill="#8cc4ea"/><rect x="160" y="0" width="1" height="1" fill="#8cc4ea"/><rect x="162" y="2" width="1" height="1" fill="#8cc4ea" opacity=".55"/><rect x="160" y="4" width="1" height="1" fill="#8cc4ea"/><rect x="165" y="0" width="1" height="1" fill="#8cc4ea"/><rect x="167" y="2" width="1" height="1" fill="#8cc4ea" opacity=".55"/><rect x="165" y="4" width="1" height="1" fill="#8cc4ea"/><rect x="170" y="0" width="1" height="1" fill="#8cc4ea"/><rect x="172" y="2" width="1" height="1" fill="#8cc4ea" opacity=".55"/><rect x="170" y="4" width="1" height="1" fill="#8cc4ea"/><rect x="175" y="0" width="1" height="1" fill="#8cc4ea"/><rect x="177" y="2" width="1" height="1" fill="#8cc4ea" opacity=".55"/><rect x="175" y="4" width="1" height="1" fill="#8cc4ea"/><rect x="180" y="0" width="1" height="1" fill="#8cc4ea"/><rect x="182" y="2" width="1" height="1" fill="#8cc4ea" opacity=".55"/><rect x="180" y="4" width="1" height="1" fill="#8cc4ea"/><rect x="185" y="0" width="1" height="1" fill="#8cc4ea"/><rect x="187" y="2" width="1" height="1" fill="#8cc4ea" opacity=".55"/><rect x="185" y="4" width="1" height="1" fill="#8cc4ea"/><rect x="190" y="0" width="1" height="1" fill="#8cc4ea"/><rect x="192" y="2" width="1" height="1" fill="#8cc4ea" opacity=".55"/><rect x="190" y="4" width="1" height="1" fill="#8cc4ea"/><rect x="195" y="0" width="1" height="1" fill="#8cc4ea"/><rect x="197" y="2" width="1" height="1" fill="#8cc4ea" opacity=".55"/><rect x="195" y="4" width="1" height="1" fill="#8cc4ea"/><rect x="200" y="0" width="1" height="1" fill="#8cc4ea"/><rect x="202" y="2" width="1" height="1" fill="#8cc4ea" opacity=".55"/><rect x="200" y="4" width="1" height="1" fill="#8cc4ea"/><rect x="205" y="0" width="1" height="1" fill="#8cc4ea"/><rect x="207" y="2" width="1" height="1" fill="#8cc4ea" opacity=".55"/><rect x="205" y="4" width="1" height="1" fill="#8cc4ea"/><rect x="210" y="0" width="1" height="1" fill="#8cc4ea"/><rect x="212" y="2" width="1" height="1" fill="#8cc4ea" opacity=".55"/><rect x="210" y="4" width="1" height="1" fill="#8cc4ea"/><rect x="215" y="0" width="1" height="1" fill="#8cc4ea"/><rect x="217" y="2" width="1" height="1" fill="#8cc4ea" opacity=".55"/><rect x="215" y="4" width="1" height="1" fill="#8cc4ea"/><rect x="220" y="0" width="1" height="1" fill="#8cc4ea"/><rect x="222" y="2" width="1" height="1" fill="#8cc4ea" opacity=".55"/><rect x="220" y="4" width="1" height="1" fill="#8cc4ea"/><rect x="225" y="0" width="1" height="1" fill="#8cc4ea"/><rect x="227" y="2" width="1" height="1" fill="#8cc4ea" opacity=".55"/><rect x="225" y="4" width="1" height="1" fill="#8cc4ea"/><rect x="230" y="0" width="1" height="1" fill="#8cc4ea"/><rect x="232" y="2" width="1" height="1" fill="#8cc4ea" opacity=".55"/><rect x="230" y="4" width="1" height="1" fill="#8cc4ea"/><rect x="235" y="0" width="1" height="1" fill="#8cc4ea"/><rect x="237" y="2" width="1" height="1" fill="#8cc4ea" opacity=".55"/><rect x="235" y="4" width="1" height="1" fill="#8cc4ea"/><rect x="240" y="0" width="1" height="1" fill="#8cc4ea"/><rect x="242" y="2" width="1" height="1" fill="#8cc4ea" opacity=".55"/><rect x="240" y="4" width="1" height="1" fill="#8cc4ea"/></svg>
<svg style="left:1842px;top:302px;" width="10" height="5" viewBox="0 0 10 5"><path d="M0 0 L10 0 L5 5 Z" fill="#ffffff"/></svg>
<svg style="left:1863px;top:298px;" width="9" height="14" viewBox="0 0 9 14"><path d="M1.5 0.5 L7.5 0.5 L7.5 8 L1.5 8 Z" fill="none" stroke="#ffffff" stroke-width="1.3"/><rect x="5" y="1" width="2.5" height="7" fill="#ffffff"/><rect x="0" y="7.5" width="9" height="1.3" fill="#ffffff"/><rect x="4" y="8.5" width="1.2" height="5.5" fill="#ffffff"/></svg>
<svg style="left:1883px;top:300px;" width="12" height="10" viewBox="0 0 12 10"><path d="M0.5 0.3 L11.5 9.7 M11.5 0.3 L0.5 9.7" stroke="#ffffff" stroke-width="1.6"/></svg>
<svg style="left:1509px;top:335px;" width="15" height="15" viewBox="0 0 15 15"><path d="M1.5 13.5 L7 8" stroke="#424242" stroke-width="3" stroke-linecap="round"/><path d="M6 9 C4.5 4.5,8 0.5,13 1.5 L10 4.5 L11.5 6 L14.5 3 C15 8,11 10.5,7 8.5" fill="#424242"/></svg>
<div class="t" style="left:1533.0px;top:335.7px;font-size:15px;line-height:15px;color:#1e1e1e;transform:scaleX(1.050);transform-origin:0 0;">Widget</div>
<svg style="left:1603px;top:340px;" width="17" height="6" viewBox="0 0 17 6"><rect x="0" y="0" width="16.5" height="5.5" fill="#424242"/><path d="M3 0 L3 2 M6 0 L6 2 M9 0 L9 2 M12 0 L12 2" stroke="#eeeef2" stroke-width="1"/></svg>
<div class="t" style="left:1627.0px;top:335.7px;font-size:15px;line-height:15px;color:#1e1e1e;transform:scaleX(0.977);transform-origin:0 0;">Layout</div>
<svg style="left:1693px;top:335px;" width="12" height="15" viewBox="0 0 12 15"><path d="M6 0.5 L11 0.5 L7 6 L10 6 L3 14.5 L5 8 L2 8 Z" fill="#424242"/></svg>
<div class="t" style="left:1716.8px;top:335.7px;font-size:15px;line-height:15px;color:#1e1e1e;transform:scaleX(0.898);transform-origin:0 0;">Events</div>
<div style="left:1500px;top:365px;width:383px;height:621px;background:#f5f5f5;"></div>
<div style="left:1883px;top:365px;width:21px;height:621px;background:#e8e8ec;"></div>
<svg style="left:1887px;top:372px;" width="13" height="7" viewBox="0 0 13 7"><path d="M0 6.5 L6.5 0 L13 6.5 Z" fill="#868999"/></svg>
<svg style="left:1887px;top:971px;" width="13" height="7" viewBox="0 0 13 7"><path d="M0 0 L6.5 6.5 L13 0 Z" fill="#868999"/></svg>
<div style="left:1888px;top:385px;width:11px;height:183px;background:#d0d1d7;"></div>
<svg style="left:1507px;top:377px;" width="10.5" height="10.5" viewBox="0 0 10.5 10.5"><path d="M10.0 0.5 L10.0 10.0 L0.5 10.0 Z" fill="#1e1e1e"/></svg>
<div class="t" style="left:1525.0px;top:376.2px;font-size:15px;line-height:15px;color:#1e1e1e;">Identity</div>
<div class="t" style="left:1524.4px;top:413.3px;font-size:15px;line-height:15px;color:#1e1e1e;">Name</div>
<div style="left:1649px;top:409px;width:229px;height:27px;background:#fcfcfc;border:1px solid #cccedb;box-sizing:border-box;"></div>
<div class="t" style="left:1524.4px;top:448.3px;font-size:15px;line-height:15px;color:#1e1e1e;transform:scaleX(0.869);transform-origin:0 0;">Class</div>
<div style="left:1649px;top:444px;width:229px;height:27px;background:#fcfcfc;border:1px solid #cccedb;box-sizing:border-box;"></div>
<svg style="left:1862px;top:454px;" width="9" height="6" viewBox="0 0 9 6"><path d="M1 1 L4.5 4.5 L8 1" stroke="#444" stroke-width="1.4" fill="none"/></svg>
<div style="left:1503px;top:487px;width:378px;height:1px;background:#e8e8ec;"></div>
<svg style="left:1507px;top:502.5px;" width="10.5" height="10.5" viewBox="0 0 10.5 10.5"><path d="M10.0 0.5 L10.0 10.0 L0.5 10.0 Z" fill="#1e1e1e"/></svg>
<div class="t" style="left:1525.0px;top:500.8px;font-size:15px;line-height:15px;color:#1e1e1e;">Label</div>
<div class="t" style="left:1524.4px;top:537.5px;font-size:15px;line-height:15px;color:#1e1e1e;">Text</div>
<div style="left:1649px;top:534px;width:229px;height:27px;background:#fcfcfc;border:1px solid #cccedb;box-sizing:border-box;"></div>
<div class="t" style="left:1656.3px;top:540.8px;font-size:15px;line-height:15px;color:#717171;">Plain</div>
<svg style="left:1862px;top:544px;" width="9" height="6" viewBox="0 0 9 6"><path d="M1 1 L4.5 4.5 L8 1" stroke="#444" stroke-width="1.4" fill="none"/></svg>
<div style="left:1649px;top:569px;width:229px;height:27px;background:#fcfcfc;border:1px solid #cccedb;box-sizing:border-box;"></div>
<div class="t" style="left:1655.6px;top:575.8px;font-size:15px;line-height:15px;color:#1e1e1e;transform:scaleX(0.953);transform-origin:0 0;">Enter a Phoneword:</div>
<div style="left:1783px;top:574px;width:1px;height:17px;background:#1e1e1e;"></div>
<div class="t" style="left:1524.4px;top:608.3px;font-size:15px;line-height:15px;color:#1e1e1e;">Color</div>
<div style="left:1650px;top:605px;width:227px;height:33px;background:#000;"></div>
<div class="t" style="left:1714.5px;top:613.8px;font-size:15px;line-height:15px;color:#a0a0a0;">Dark text color</div>
<div style="left:1649px;top:644px;width:76px;height:30px;background:#fcfcfc;border:1px solid #cccedb;box-sizing:border-box;"></div>
<div style="left:1725px;top:644px;width:77px;height:30px;background:#fcfcfc;border:1px solid #cccedb;box-sizing:border-box;"></div>
<div style="left:1802px;top:644px;width:76px;height:30px;background:#fcfcfc;border:1px solid #3399ff;box-sizing:border-box;"></div>
<div class="t" style="left:1662.0px;top:651.8px;font-size:15px;line-height:15px;color:#1e1e1e;transform:scaleX(1.031);transform-origin:0 0;">Default</div>
<div class="t" style="left:1737.7px;top:651.8px;font-size:15px;line-height:15px;color:#1e1e1e;transform:scaleX(0.967);transform-origin:0 0;">Custom</div>
<div style="left:1803px;top:645px;width:72px;height:28px;overflow:hidden;"><div class="t" style="left:2px;top:6.8px;font-size:15px;line-height:15px;color:#1e1e1e;">Predefined</div></div>
<div style="left:1857px;top:684px;width:21px;height:160px;background:#e8e8ec;"></div>
<svg style="left:1861px;top:690px;" width="13" height="7" viewBox="0 0 13 7"><path d="M0 6.5 L6.5 0 L13 6.5 Z" fill="#868999"/></svg>
<svg style="left:1861px;top:829px;" width="13" height="7" viewBox="0 0 13 7"><path d="M0 0 L6.5 6.5 L13 0 Z" fill="#868999"/></svg>
<div style="left:1862px;top:702px;width:11px;height:29px;background:#d0d1d7;"></div>
<svg style="left:1652px;top:692px;" width="11" height="7" viewBox="0 0 11 7"><path d="M0.5 0.5 L10.5 0.5 L5.5 6.5 Z" fill="#1e1e1e"/></svg>
<div class="t" style="left:1668.0px;top:686.8px;font-size:15px;line-height:15px;color:#1e1e1e;">System Colors</div>
<div style="left:1676px;top:710px;width:25px;height:20px;background:#000;border:1.5px solid #1e1e1e;box-sizing:border-box;"></div>
<div style="left:1708px;top:708px;width:147px;height:24px;overflow:hidden;"><div class="t" style="left:0;top:5.3px;font-size:15px;line-height:15px;color:#1e1e1e;">Dark text</div></div>
<div style="left:1676px;top:743px;width:25px;height:20px;background:#eeeef2;border:1.5px solid #1e1e1e;box-sizing:border-box;"></div>
<div style="left:1708px;top:741px;width:147px;height:24px;overflow:hidden;"><div class="t" style="left:0;top:5.3px;font-size:15px;line-height:15px;color:#1e1e1e;">Group TableView Back</div></div>
<div style="left:1676px;top:775px;width:25px;height:20px;background:#fff;border:1.5px solid #1e1e1e;box-sizing:border-box;"></div>
<div style="left:1708px;top:773px;width:147px;height:24px;overflow:hidden;"><div class="t" style="left:0;top:5.3px;font-size:15px;line-height:15px;color:#1e1e1e;">Light text</div></div>
<div style="left:1676px;top:808px;width:25px;height:20px;background:#6d6f76;border:1.5px solid #1e1e1e;box-sizing:border-box;"></div>
<div style="left:1708px;top:806px;width:147px;height:24px;overflow:hidden;"><div class="t" style="left:0;top:5.3px;font-size:15px;line-height:15px;color:#1e1e1e;">Scrollview Textured Ba</div></div>
<svg style="left:1678px;top:777px;" width="21" height="16" viewBox="0 0 21 16"><rect x="0" y="0" width="10.5" height="8" fill="#d8d8d8"/><rect x="10.5" y="8" width="10.5" height="8" fill="#d8d8d8"/></svg>
<div style="left:1676px;top:840px;width:25px;height:4px;background:#1e1e1e;"></div>
<div class="t" style="left:1524.0px;top:855.8px;font-size:15px;line-height:15px;color:#1e1e1e;">Font</div>
<div style="left:1649px;top:851px;width:129px;height:28px;background:#fcfcfc;border:1px solid #cccedb;box-sizing:border-box;"></div>
<div class="t" style="left:1656.0px;top:857.8px;font-size:15px;line-height:15px;color:#717171;">System</div>
<svg style="left:1762px;top:861px;" width="9" height="6" viewBox="0 0 9 6"><path d="M1 1 L4.5 4.5 L8 1" stroke="#444" stroke-width="1.4" fill="none"/></svg>
<div style="left:1791px;top:852px;width:87px;height:31px;background:#fcfcfc;border:1px solid #cccedb;box-sizing:border-box;"></div>
<div class="t" style="left:1797.0px;top:859.3px;font-size:15px;line-height:15px;color:#717171;">17</div>
<svg style="left:1862px;top:864px;" width="9" height="6" viewBox="0 0 9 6"><path d="M1 1 L4.5 4.5 L8 1" stroke="#444" stroke-width="1.4" fill="none"/></svg>
<div style="left:1649px;top:886px;width:129px;height:28px;background:#fcfcfc;border:1px solid #cccedb;box-sizing:border-box;"></div>
<div class="t" style="left:1656.0px;top:892.8px;font-size:15px;line-height:15px;color:#717171;">Regular</div>
<svg style="left:1762px;top:896px;" width="9" height="6" viewBox="0 0 9 6"><path d="M1 1 L4.5 4.5 L8 1" stroke="#444" stroke-width="1.4" fill="none"/></svg>
<div class="t" style="left:1524.0px;top:926.3px;font-size:15px;line-height:15px;color:#1e1e1e;">Alignment</div>
<div style="left:1681px;top:921px;width:33px;height:30px;background:#f5f5f5;border:1px solid #cccedb;box-sizing:border-box;"></div>
<div style="left:1713px;top:921px;width:33px;height:30px;background:#f5f5f5;border:1px solid #cccedb;box-sizing:border-box;"></div>
<div style="left:1649px;top:921px;width:33px;height:30px;background:#eeeef2;border:1px solid #3399ff;box-sizing:border-box;"></div>
<svg style="left:1655px;top:929px;" width="19" height="12" viewBox="0 0 19 12"><path d="M0 2 L18 2 M0 5.5 L12 5.5 M0 9 L18 9" stroke="#424242" stroke-width="1.6"/></svg>
<svg style="left:1688px;top:929px;" width="19" height="12" viewBox="0 0 19 12"><path d="M0 2 L18 2 M3 5.5 L15 5.5 M0 9 L18 9" stroke="#424242" stroke-width="1.6"/></svg>
<svg style="left:1720px;top:929px;" width="19" height="12" viewBox="0 0 19 12"><path d="M0 2 L18 2 M6 5.5 L18 5.5 M0 9 L18 9" stroke="#424242" stroke-width="1.6"/></svg>
<div class="t" style="left:1524.0px;top:963.3px;font-size:15px;line-height:15px;color:#1e1e1e;">Lines</div>
<div style="left:1649px;top:959px;width:229px;height:27px;background:#fcfcfc;border:1px solid #cccedb;box-sizing:border-box;"></div>
<div style="left:1857px;top:960px;width:1px;height:25px;background:#e0e0e6;"></div>
<svg style="left:1861px;top:963px;" width="12" height="7" viewBox="0 0 12 7"><path d="M0 6 L6 0 L12 6 Z" fill="#b0b2bc"/></svg>
<svg style="left:1861px;top:975px;" width="12" height="7" viewBox="0 0 12 7"><path d="M0 0 L6 6 L12 0 Z" fill="#b0b2bc"/></svg>
<div class="t" style="left:1656.0px;top:966.3px;font-size:15px;line-height:15px;color:#1e1e1e;">1</div>
<div style="left:0px;top:993px;width:1911px;height:30px;background:#007acc;"></div>
<div class="t" style="left:-1.5px;top:1001.3px;font-size:15px;line-height:15px;color:#ffffff;transform:scaleX(0.961);transform-origin:0 0;">Connected to Xamarin.iOS Build Host at 192.168.1.31</div>
<div style="left:0px;top:1023px;width:1911px;height:9px;background:linear-gradient(90deg,#7a6f3c 0%,#7f7440 30%,#857a48 55%,#8a7e52 62%,#a39377 70%,#a89a80 80%,#9c8d6c 90%,#7d7143 95%,#857a50 100%);"></div>
<div style="left:1244px;top:1023px;width:560px;height:9px;background:radial-gradient(ellipse at 30% 80%,rgba(190,175,150,.5),transparent 60%),radial-gradient(ellipse at 70% 50%,rgba(190,175,150,.5),transparent 60%);"></div>
<div style="left:126px;top:1024px;width:70px;height:8px;background:#a69d79;border:1px solid #c9c3a8;border-bottom:none;box-sizing:border-box;"></div>
<div style="left:344px;top:1024px;width:70px;height:8px;background:#b6ae93;border:1px solid #d8d2bc;border-bottom:none;box-sizing:border-box;"></div>
<div style="left:359px;top:1026px;width:40px;height:6px;background:#68217a;"></div>
<div style="left:143px;top:1027px;width:34px;height:5px;background:#e8c66a;"></div>
<div style="left:146px;top:1026px;width:4px;height:6px;background:#3a9a3a;"></div>
<div style="left:24px;top:1028px;width:14px;height:4px;background:#f2f2f2;"></div>
<div style="left:80px;top:1026px;width:24px;height:12px;border-radius:12px 12px 0 0;border:3px solid #f0b820;border-bottom:none;box-sizing:border-box;background:#3a7bd5;"></div>
<div style="left:221px;top:1027px;width:21px;height:10px;border-radius:10px 10px 0 0;background:#d84030;"></div>
<div style="left:294px;top:1028px;width:15px;height:4px;background:#2060c0;"></div>
<div style="left:444px;top:1029px;width:16px;height:3px;background:#303030;"></div>
<div style="left:513px;top:1028px;width:15px;height:4px;background:#2a5cb8;"></div>
<div style="left:584px;top:1026px;width:27px;height:12px;border-radius:13px 13px 0 0;background:#f0c060;"></div>
<div style="left:596px;top:1027px;width:3px;height:3px;background:#30a0d0;"></div>
</body></html>
